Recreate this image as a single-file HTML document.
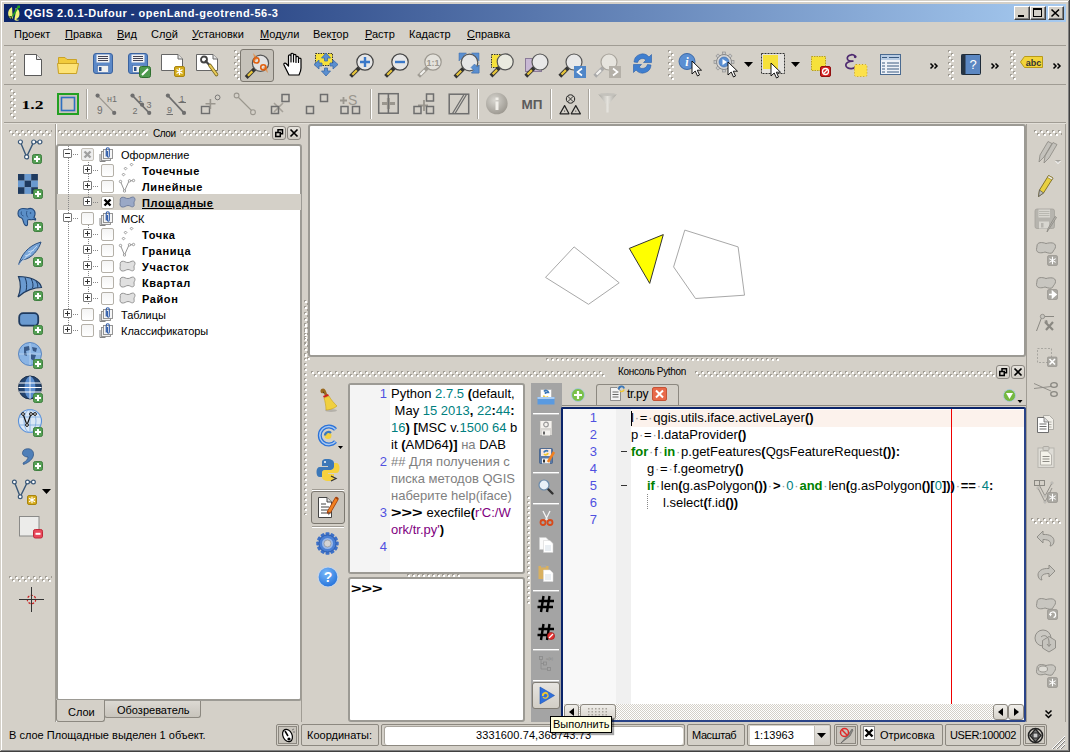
<!DOCTYPE html><html><head><meta charset="utf-8"><style>
*{margin:0;padding:0;box-sizing:border-box}
html,body{width:1070px;height:752px;overflow:hidden;background:#d4d0c8}
body{position:relative;font-family:"Liberation Sans",sans-serif;font-size:11px;color:#000}
.t{position:absolute;white-space:pre;line-height:13px}
.b{font-weight:bold;letter-spacing:0.6px}
svg{position:absolute;overflow:visible}
</style></head><body>
<svg width="0" height="0" style="position:absolute"><defs><pattern id="grip" width="6" height="6" patternUnits="userSpaceOnUse"><rect x="0" y="0" width="2" height="2" fill="#a09c94"/><rect x="1" y="1" width="2" height="2" fill="#fff"/><rect x="3" y="3" width="2" height="2" fill="#a09c94"/><rect x="4" y="4" width="2" height="2" fill="#fff"/></pattern><pattern id="grip1" width="3" height="5" patternUnits="userSpaceOnUse"><rect x="0" y="0" width="2" height="2" fill="#a09c94"/><rect x="1" y="1" width="2" height="2" fill="#fff"/></pattern><pattern id="grip1h" width="5" height="3" patternUnits="userSpaceOnUse"><rect x="0" y="0" width="2" height="2" fill="#a09c94"/><rect x="1" y="1" width="2" height="2" fill="#fff"/></pattern></defs></svg>
<div style="position:absolute;left:0px;top:0px;width:1070px;height:752px;border-top:1px solid #d4d0c8;border-left:1px solid #d4d0c8;"></div><div style="position:absolute;left:1px;top:1px;width:1068px;height:1px;background:#fff"></div><div style="position:absolute;left:1px;top:1px;width:1px;height:750px;background:#fff"></div><div style="position:absolute;left:1069px;top:0px;width:1px;height:752px;background:#404040"></div><div style="position:absolute;left:0px;top:751px;width:1070px;height:1px;background:#404040"></div><div style="position:absolute;left:1068px;top:1px;width:1px;height:750px;background:#808080"></div><div style="position:absolute;left:1px;top:750px;width:1068px;height:1px;background:#808080"></div><div style="position:absolute;left:4px;top:4px;width:1062px;height:18px;background:linear-gradient(to right,#0a246a,#a6caf0)"></div><svg style="position:absolute;left:7px;top:5px;" width="14" height="17" viewBox="0 0 14 17"><path d="M5 2C2 3.5 0.8 6.5 1.2 9.5C1.6 12.5 3.5 14 5.5 13.8C6 12 5.8 10.5 5.5 9C5.2 7 5.3 4 5 2Z" fill="#f2f27a"/><path d="M8.5 3C11.5 3.5 12.8 6.5 12.5 9.5C12.2 12 11 13.5 9 14C10 14.8 11 15 12.5 14.8C11 16 9 16 7.5 15C7.5 12 8.5 10 8.5 8C8.5 6 8.8 4.5 8.5 3Z" fill="#f2f27a"/><path d="M11.5 1.5L5.5 11.5" stroke="#20a020" stroke-width="1.5"/><rect x="10.5" y="0.5" width="2.5" height="2.5" fill="#20a020"/><path d="M1 12L4.5 11.5M4 11L4.5 14" stroke="#103010" stroke-width="1.1"/></svg><div class="t" style="left:24px;top:7px;color:#fff;font-weight:bold;letter-spacing:0.5px">QGIS 2.0.1-Dufour - openLand-geotrend-56-3</div><div style="position:absolute;left:1014px;top:6px;width:16px;height:14px;background:#d4d0c8;border-top:1px solid #fff;border-left:1px solid #fff;border-right:1px solid #404040;border-bottom:1px solid #404040;box-shadow:inset -1px -1px 0 #808080"></div><div style="position:absolute;left:1030px;top:6px;width:16px;height:14px;background:#d4d0c8;border-top:1px solid #fff;border-left:1px solid #fff;border-right:1px solid #404040;border-bottom:1px solid #404040;box-shadow:inset -1px -1px 0 #808080"></div><div style="position:absolute;left:1048px;top:6px;width:16px;height:14px;background:#d4d0c8;border-top:1px solid #fff;border-left:1px solid #fff;border-right:1px solid #404040;border-bottom:1px solid #404040;box-shadow:inset -1px -1px 0 #808080"></div><div style="position:absolute;left:1018px;top:15px;width:6px;height:2px;background:#000"></div><div style="position:absolute;left:1033px;top:8px;width:9px;height:9px;border:1px solid #000;border-top-width:2px"></div><svg style="position:absolute;left:1051px;top:9px;" width="9" height="8" viewBox="0 0 9 8"><path d="M0.5 0.5L8 7.5M8 0.5L0.5 7.5" stroke="#000" stroke-width="1.6"/></svg><div class="t" style="left:14px;top:28px;">П<u>р</u>оект</div><div class="t" style="left:65px;top:28px;"><u>П</u>равка</div><div class="t" style="left:117px;top:28px;"><u>В</u>ид</div><div class="t" style="left:151px;top:28px;">Сл<u>о</u>й</div><div class="t" style="left:192px;top:28px;"><u>У</u>становки</div><div class="t" style="left:260px;top:28px;"><u>М</u>одули</div><div class="t" style="left:313px;top:28px;">Век<u>т</u>ор</div><div class="t" style="left:365px;top:28px;"><u>Р</u>астр</div><div class="t" style="left:409px;top:28px;">Кадастр</div><div class="t" style="left:467px;top:28px;"><u>С</u>правка</div><div style="position:absolute;left:4px;top:45px;width:1062px;height:1px;background:#a09c94"></div><div style="position:absolute;left:4px;top:84px;width:1062px;height:1px;background:#a09c94"></div><div style="position:absolute;left:4px;top:122px;width:1062px;height:1px;background:#a09c94"></div><div style="position:absolute;left:4px;top:123px;width:1062px;height:1px;background:#e2dfd8"></div><div style="position:absolute;left:55px;top:124px;width:1px;height:598px;background:#a09c94"></div><div style="position:absolute;left:56px;top:124px;width:1px;height:598px;background:#fff"></div><svg style="left:9px;top:130px" width="43" height="6"><rect width="43" height="6" fill="url(#grip)"/></svg><svg style="left:9px;top:576px" width="43" height="6"><rect width="43" height="6" fill="url(#grip)"/></svg><svg style="left:58px;top:130px" width="90" height="6"><rect width="90" height="6" fill="url(#grip)"/></svg><div class="t" style="left:153px;top:127px;font-size:10px;letter-spacing:-0.4px">Слои</div><svg style="left:180px;top:130px" width="90" height="6"><rect width="90" height="6" fill="url(#grip)"/></svg><div style="position:absolute;left:272px;top:126px;width:14px;height:14px;border:1px solid #8a8680;border-radius:3px;background:linear-gradient(#e6e3dd,#d0ccc4)"></div><div style="position:absolute;left:287px;top:126px;width:14px;height:14px;border:1px solid #8a8680;border-radius:3px;background:linear-gradient(#e6e3dd,#d0ccc4)"></div><svg style="position:absolute;left:275px;top:129px;" width="8" height="8" viewBox="0 0 8 8"><rect x="3" y="0.75" width="4.5" height="4" fill="none" stroke="#000" stroke-width="1.5"/><rect x="0.75" y="3.5" width="4.5" height="4" fill="#d8d4cc" stroke="#000" stroke-width="1.5"/></svg><svg style="position:absolute;left:290px;top:129px;" width="8" height="8" viewBox="0 0 8 8"><path d="M0.5 0.5L7.5 7.5M7.5 0.5L0.5 7.5" stroke="#000" stroke-width="1.7"/></svg><div style="position:absolute;left:56px;top:144px;width:246px;height:557px;background:#fff;border:2px solid #9c9a94;border-radius:3px"></div><div style="position:absolute;left:56px;top:700px;width:49px;height:22px;background:#d4d0c8;border:1px solid #8c8880;border-top:none;border-radius:0 0 3px 3px"></div><div class="t" style="left:68px;top:706px;">Слои</div><div style="position:absolute;left:104px;top:701px;width:97px;height:17px;background:linear-gradient(#dcd9d3,#c8c4bc);border:1px solid #8c8880;border-top:none;border-radius:0 0 3px 3px"></div><div class="t" style="left:117px;top:704px;">Обозреватель</div><svg style="left:304px;top:300px" width="6" height="60"><rect width="6" height="60" fill="url(#grip)"/></svg><div style="position:absolute;left:308px;top:124px;width:718px;height:233px;background:#fff;border:2px solid #9c9a94;border-radius:3px"></div><div style="position:absolute;left:301px;top:360px;width:1px;height:362px;background:#a09c94"></div><svg style="position:absolute;left:546px;top:358px;" width="234" height="3" viewBox="0 0 234 3"><rect width="234" height="3" fill="url(#grip1h)"/></svg><svg style="left:311px;top:371px" width="294" height="6"><rect width="294" height="6" fill="url(#grip)"/></svg><div class="t" style="left:618px;top:365px;font-size:10px;letter-spacing:-0.3px">Консоль Python</div><svg style="left:695px;top:371px" width="300" height="6"><rect width="300" height="6" fill="url(#grip)"/></svg><div style="position:absolute;left:996px;top:365px;width:14px;height:14px;border:1px solid #8a8680;border-radius:3px;background:linear-gradient(#e6e3dd,#d0ccc4)"></div><div style="position:absolute;left:1011px;top:365px;width:14px;height:14px;border:1px solid #8a8680;border-radius:3px;background:linear-gradient(#e6e3dd,#d0ccc4)"></div><svg style="position:absolute;left:999px;top:368px;" width="8" height="8" viewBox="0 0 8 8"><rect x="3" y="0.75" width="4.5" height="4" fill="none" stroke="#000" stroke-width="1.5"/><rect x="0.75" y="3.5" width="4.5" height="4" fill="#d8d4cc" stroke="#000" stroke-width="1.5"/></svg><svg style="position:absolute;left:1014px;top:368px;" width="8" height="8" viewBox="0 0 8 8"><path d="M0.5 0.5L7.5 7.5M7.5 0.5L0.5 7.5" stroke="#000" stroke-width="1.7"/></svg><div style="position:absolute;left:348px;top:383px;width:177px;height:191px;background:#fff;border:2px solid #9c9a94;border-radius:3px"></div><div style="position:absolute;left:350px;top:385px;width:40px;height:187px;background:#f4f4f4"></div><svg style="position:absolute;left:407px;top:574px;" width="54" height="3" viewBox="0 0 54 3"><rect width="54" height="3" fill="url(#grip1h)"/></svg><svg style="position:absolute;left:527px;top:496px;" width="3" height="108" viewBox="0 0 3 108"><rect width="3" height="108" fill="url(#grip1)"/></svg><div style="position:absolute;left:348px;top:577px;width:177px;height:145px;background:#fff;border:2px solid #9c9a94;border-radius:3px"></div><div style="position:absolute;left:531px;top:383px;width:31px;height:339px;background:#a4a4a4"></div><div style="position:absolute;left:596px;top:384px;width:83px;height:22px;background:#d4d0c8;border:1px solid #8c8880;border-bottom:none;border-radius:3px 3px 0 0"></div><div style="position:absolute;left:562px;top:405px;width:464px;height:1px;background:#8c8880"></div><div style="position:absolute;left:561px;top:407px;width:465px;height:315px;background:#fff;border:2px solid #0a246a;border-right-color:#2a4488;border-bottom-color:#2a4488;border-radius:2px"></div><div style="position:absolute;left:563px;top:409px;width:53px;height:295px;background:#f8f8f8"></div><div style="position:absolute;left:616px;top:409px;width:15px;height:295px;background:#f0f0f0"></div><div style="position:absolute;left:631px;top:410px;width:393px;height:17px;background:#fcf2ec"></div><div style="position:absolute;left:951px;top:409px;width:1px;height:295px;background:#e00"></div><div style="position:absolute;left:1026px;top:124px;width:1px;height:598px;background:#a09c94"></div><div style="position:absolute;left:1065px;top:124px;width:1px;height:598px;background:#a09c94"></div><svg style="left:1034px;top:130px" width="28" height="6"><rect width="28" height="6" fill="url(#grip)"/></svg><div class="t" style="left:9px;top:729px;">В слое Площадные выделен 1 объект.</div><div style="position:absolute;left:57px;top:194px;width:244px;height:16px;background:#d4d0c8"></div><svg style="position:absolute;left:68px;top:146px;" width="1" height="180" viewBox="0 0 1 180"><rect x="0" y="0" width="1" height="1" fill="#888"/><rect x="0" y="2" width="1" height="1" fill="#888"/><rect x="0" y="4" width="1" height="1" fill="#888"/><rect x="0" y="6" width="1" height="1" fill="#888"/><rect x="0" y="8" width="1" height="1" fill="#888"/><rect x="0" y="10" width="1" height="1" fill="#888"/><rect x="0" y="12" width="1" height="1" fill="#888"/><rect x="0" y="14" width="1" height="1" fill="#888"/><rect x="0" y="16" width="1" height="1" fill="#888"/><rect x="0" y="18" width="1" height="1" fill="#888"/><rect x="0" y="20" width="1" height="1" fill="#888"/><rect x="0" y="22" width="1" height="1" fill="#888"/><rect x="0" y="24" width="1" height="1" fill="#888"/><rect x="0" y="26" width="1" height="1" fill="#888"/><rect x="0" y="28" width="1" height="1" fill="#888"/><rect x="0" y="30" width="1" height="1" fill="#888"/><rect x="0" y="32" width="1" height="1" fill="#888"/><rect x="0" y="34" width="1" height="1" fill="#888"/><rect x="0" y="36" width="1" height="1" fill="#888"/><rect x="0" y="38" width="1" height="1" fill="#888"/><rect x="0" y="40" width="1" height="1" fill="#888"/><rect x="0" y="42" width="1" height="1" fill="#888"/><rect x="0" y="44" width="1" height="1" fill="#888"/><rect x="0" y="46" width="1" height="1" fill="#888"/><rect x="0" y="48" width="1" height="1" fill="#888"/><rect x="0" y="50" width="1" height="1" fill="#888"/><rect x="0" y="52" width="1" height="1" fill="#888"/><rect x="0" y="54" width="1" height="1" fill="#888"/><rect x="0" y="56" width="1" height="1" fill="#888"/><rect x="0" y="58" width="1" height="1" fill="#888"/><rect x="0" y="60" width="1" height="1" fill="#888"/><rect x="0" y="62" width="1" height="1" fill="#888"/><rect x="0" y="64" width="1" height="1" fill="#888"/><rect x="0" y="66" width="1" height="1" fill="#888"/><rect x="0" y="68" width="1" height="1" fill="#888"/><rect x="0" y="70" width="1" height="1" fill="#888"/><rect x="0" y="72" width="1" height="1" fill="#888"/><rect x="0" y="74" width="1" height="1" fill="#888"/><rect x="0" y="76" width="1" height="1" fill="#888"/><rect x="0" y="78" width="1" height="1" fill="#888"/><rect x="0" y="80" width="1" height="1" fill="#888"/><rect x="0" y="82" width="1" height="1" fill="#888"/><rect x="0" y="84" width="1" height="1" fill="#888"/><rect x="0" y="86" width="1" height="1" fill="#888"/><rect x="0" y="88" width="1" height="1" fill="#888"/><rect x="0" y="90" width="1" height="1" fill="#888"/><rect x="0" y="92" width="1" height="1" fill="#888"/><rect x="0" y="94" width="1" height="1" fill="#888"/><rect x="0" y="96" width="1" height="1" fill="#888"/><rect x="0" y="98" width="1" height="1" fill="#888"/><rect x="0" y="100" width="1" height="1" fill="#888"/><rect x="0" y="102" width="1" height="1" fill="#888"/><rect x="0" y="104" width="1" height="1" fill="#888"/><rect x="0" y="106" width="1" height="1" fill="#888"/><rect x="0" y="108" width="1" height="1" fill="#888"/><rect x="0" y="110" width="1" height="1" fill="#888"/><rect x="0" y="112" width="1" height="1" fill="#888"/><rect x="0" y="114" width="1" height="1" fill="#888"/><rect x="0" y="116" width="1" height="1" fill="#888"/><rect x="0" y="118" width="1" height="1" fill="#888"/><rect x="0" y="120" width="1" height="1" fill="#888"/><rect x="0" y="122" width="1" height="1" fill="#888"/><rect x="0" y="124" width="1" height="1" fill="#888"/><rect x="0" y="126" width="1" height="1" fill="#888"/><rect x="0" y="128" width="1" height="1" fill="#888"/><rect x="0" y="130" width="1" height="1" fill="#888"/><rect x="0" y="132" width="1" height="1" fill="#888"/><rect x="0" y="134" width="1" height="1" fill="#888"/><rect x="0" y="136" width="1" height="1" fill="#888"/><rect x="0" y="138" width="1" height="1" fill="#888"/><rect x="0" y="140" width="1" height="1" fill="#888"/><rect x="0" y="142" width="1" height="1" fill="#888"/><rect x="0" y="144" width="1" height="1" fill="#888"/><rect x="0" y="146" width="1" height="1" fill="#888"/><rect x="0" y="148" width="1" height="1" fill="#888"/><rect x="0" y="150" width="1" height="1" fill="#888"/><rect x="0" y="152" width="1" height="1" fill="#888"/><rect x="0" y="154" width="1" height="1" fill="#888"/><rect x="0" y="156" width="1" height="1" fill="#888"/><rect x="0" y="158" width="1" height="1" fill="#888"/><rect x="0" y="160" width="1" height="1" fill="#888"/><rect x="0" y="162" width="1" height="1" fill="#888"/><rect x="0" y="164" width="1" height="1" fill="#888"/><rect x="0" y="166" width="1" height="1" fill="#888"/><rect x="0" y="168" width="1" height="1" fill="#888"/><rect x="0" y="170" width="1" height="1" fill="#888"/><rect x="0" y="172" width="1" height="1" fill="#888"/><rect x="0" y="174" width="1" height="1" fill="#888"/><rect x="0" y="176" width="1" height="1" fill="#888"/><rect x="0" y="178" width="1" height="1" fill="#888"/></svg><svg style="position:absolute;left:88px;top:160px;" width="1" height="46" viewBox="0 0 1 46"><rect x="0" y="0" width="1" height="1" fill="#888"/><rect x="0" y="2" width="1" height="1" fill="#888"/><rect x="0" y="4" width="1" height="1" fill="#888"/><rect x="0" y="6" width="1" height="1" fill="#888"/><rect x="0" y="8" width="1" height="1" fill="#888"/><rect x="0" y="10" width="1" height="1" fill="#888"/><rect x="0" y="12" width="1" height="1" fill="#888"/><rect x="0" y="14" width="1" height="1" fill="#888"/><rect x="0" y="16" width="1" height="1" fill="#888"/><rect x="0" y="18" width="1" height="1" fill="#888"/><rect x="0" y="20" width="1" height="1" fill="#888"/><rect x="0" y="22" width="1" height="1" fill="#888"/><rect x="0" y="24" width="1" height="1" fill="#888"/><rect x="0" y="26" width="1" height="1" fill="#888"/><rect x="0" y="28" width="1" height="1" fill="#888"/><rect x="0" y="30" width="1" height="1" fill="#888"/><rect x="0" y="32" width="1" height="1" fill="#888"/><rect x="0" y="34" width="1" height="1" fill="#888"/><rect x="0" y="36" width="1" height="1" fill="#888"/><rect x="0" y="38" width="1" height="1" fill="#888"/><rect x="0" y="40" width="1" height="1" fill="#888"/><rect x="0" y="42" width="1" height="1" fill="#888"/><rect x="0" y="44" width="1" height="1" fill="#888"/></svg><svg style="position:absolute;left:88px;top:225px;" width="1" height="80" viewBox="0 0 1 80"><rect x="0" y="0" width="1" height="1" fill="#888"/><rect x="0" y="2" width="1" height="1" fill="#888"/><rect x="0" y="4" width="1" height="1" fill="#888"/><rect x="0" y="6" width="1" height="1" fill="#888"/><rect x="0" y="8" width="1" height="1" fill="#888"/><rect x="0" y="10" width="1" height="1" fill="#888"/><rect x="0" y="12" width="1" height="1" fill="#888"/><rect x="0" y="14" width="1" height="1" fill="#888"/><rect x="0" y="16" width="1" height="1" fill="#888"/><rect x="0" y="18" width="1" height="1" fill="#888"/><rect x="0" y="20" width="1" height="1" fill="#888"/><rect x="0" y="22" width="1" height="1" fill="#888"/><rect x="0" y="24" width="1" height="1" fill="#888"/><rect x="0" y="26" width="1" height="1" fill="#888"/><rect x="0" y="28" width="1" height="1" fill="#888"/><rect x="0" y="30" width="1" height="1" fill="#888"/><rect x="0" y="32" width="1" height="1" fill="#888"/><rect x="0" y="34" width="1" height="1" fill="#888"/><rect x="0" y="36" width="1" height="1" fill="#888"/><rect x="0" y="38" width="1" height="1" fill="#888"/><rect x="0" y="40" width="1" height="1" fill="#888"/><rect x="0" y="42" width="1" height="1" fill="#888"/><rect x="0" y="44" width="1" height="1" fill="#888"/><rect x="0" y="46" width="1" height="1" fill="#888"/><rect x="0" y="48" width="1" height="1" fill="#888"/><rect x="0" y="50" width="1" height="1" fill="#888"/><rect x="0" y="52" width="1" height="1" fill="#888"/><rect x="0" y="54" width="1" height="1" fill="#888"/><rect x="0" y="56" width="1" height="1" fill="#888"/><rect x="0" y="58" width="1" height="1" fill="#888"/><rect x="0" y="60" width="1" height="1" fill="#888"/><rect x="0" y="62" width="1" height="1" fill="#888"/><rect x="0" y="64" width="1" height="1" fill="#888"/><rect x="0" y="66" width="1" height="1" fill="#888"/><rect x="0" y="68" width="1" height="1" fill="#888"/><rect x="0" y="70" width="1" height="1" fill="#888"/><rect x="0" y="72" width="1" height="1" fill="#888"/><rect x="0" y="74" width="1" height="1" fill="#888"/><rect x="0" y="76" width="1" height="1" fill="#888"/><rect x="0" y="78" width="1" height="1" fill="#888"/></svg><div style="position:absolute;left:63px;top:149px;width:9px;height:9px;border:1px solid #7a7a7a;background:#fff;border-radius:1px"></div><div style="position:absolute;left:65px;top:153px;width:5px;height:1px;background:#333"></div><svg style="position:absolute;left:73px;top:154px;" width="6" height="1" viewBox="0 0 6 1"><rect x="0" y="0" width="1" height="1" fill="#888"/><rect x="2" y="0" width="1" height="1" fill="#888"/><rect x="4" y="0" width="1" height="1" fill="#888"/></svg><div style="position:absolute;left:81px;top:148px;width:13px;height:13px;border:1px solid #c4c0b8;border-radius:2px;background:#eee"></div><svg style="position:absolute;left:84px;top:151px;" width="7" height="7" viewBox="0 0 7 7"><path d="M0.5 0.5L6.5 6.5M6.5 0.5L0.5 6.5" stroke="#a0a0a0" stroke-width="2.4"/></svg><svg style="position:absolute;left:99px;top:146px;" width="15" height="16" viewBox="0 0 15 16"><path d="M1 15.5V8M1 15.5H6.5" stroke="#777" fill="none" stroke-width="0.9"/><rect x="2.5" y="5.5" width="9" height="9" fill="#efefef" stroke="#8a8a8a" stroke-width="0.9"/><rect x="4.5" y="3.5" width="9" height="9" fill="#f6f6f6" stroke="#8a8a8a" stroke-width="0.9"/><path d="M7.2 10.5V3.2C7.2 1.2 10.3 1.2 10.3 3.2V10C10.3 11.6 8.4 11.6 8.4 10V5" stroke="#2d5aa8" fill="none" stroke-width="1.1"/></svg><div class="t" style="left:121px;top:149px;">Оформление</div><div style="position:absolute;left:83px;top:165px;width:9px;height:9px;border:1px solid #7a7a7a;background:#fff;border-radius:1px"></div><div style="position:absolute;left:85px;top:169px;width:5px;height:1px;background:#333"></div><div style="position:absolute;left:87px;top:167px;width:1px;height:5px;background:#333"></div><svg style="position:absolute;left:93px;top:170px;" width="6" height="1" viewBox="0 0 6 1"><rect x="0" y="0" width="1" height="1" fill="#888"/><rect x="2" y="0" width="1" height="1" fill="#888"/><rect x="4" y="0" width="1" height="1" fill="#888"/></svg><div style="position:absolute;left:101px;top:164px;width:13px;height:13px;border:1px solid #b4b0a8;border-radius:2px;background:linear-gradient(#f4f4f4,#ffffff)"></div><svg style="position:absolute;left:121px;top:163px;" width="16" height="14" viewBox="0 0 16 14"><rect x="9.5" y="0.5" width="2" height="2" transform="rotate(45 10.5 1.5)" fill="#fff" stroke="#888" stroke-width="0.8"/><rect x="3.5" y="4.5" width="2" height="2" transform="rotate(45 4.5 5.5)" fill="#fff" stroke="#888" stroke-width="0.8"/><rect x="1.5" y="10.5" width="2" height="2" transform="rotate(45 2.5 11.5)" fill="#fff" stroke="#888" stroke-width="0.8"/></svg><div class="t" style="left:142px;top:165px;font-weight:bold;letter-spacing:0.6px;">Точечные</div><div style="position:absolute;left:83px;top:181px;width:9px;height:9px;border:1px solid #7a7a7a;background:#fff;border-radius:1px"></div><div style="position:absolute;left:85px;top:185px;width:5px;height:1px;background:#333"></div><div style="position:absolute;left:87px;top:183px;width:1px;height:5px;background:#333"></div><svg style="position:absolute;left:93px;top:186px;" width="6" height="1" viewBox="0 0 6 1"><rect x="0" y="0" width="1" height="1" fill="#888"/><rect x="2" y="0" width="1" height="1" fill="#888"/><rect x="4" y="0" width="1" height="1" fill="#888"/></svg><div style="position:absolute;left:101px;top:180px;width:13px;height:13px;border:1px solid #b4b0a8;border-radius:2px;background:linear-gradient(#f4f4f4,#ffffff)"></div><svg style="position:absolute;left:119px;top:179px;" width="17" height="14" viewBox="0 0 17 14"><path d="M1.5 2.5L5.5 12L10 2L14.5 1.5" stroke="#888" fill="none" stroke-width="0.9"/><circle cx="1.5" cy="2.5" r="1.2" fill="#fff" stroke="#888" stroke-width="0.8"/><circle cx="5.5" cy="12" r="1.2" fill="#fff" stroke="#888" stroke-width="0.8"/><circle cx="10.5" cy="1.8" r="1.2" fill="#fff" stroke="#888" stroke-width="0.8"/><circle cx="14.5" cy="1.5" r="1.2" fill="#fff" stroke="#888" stroke-width="0.8"/></svg><div class="t" style="left:142px;top:181px;font-weight:bold;letter-spacing:0.6px;">Линейные</div><div style="position:absolute;left:83px;top:197px;width:9px;height:9px;border:1px solid #7a7a7a;background:#fff;border-radius:1px"></div><div style="position:absolute;left:85px;top:201px;width:5px;height:1px;background:#333"></div><div style="position:absolute;left:87px;top:199px;width:1px;height:5px;background:#333"></div><svg style="position:absolute;left:93px;top:202px;" width="6" height="1" viewBox="0 0 6 1"><rect x="0" y="0" width="1" height="1" fill="#888"/><rect x="2" y="0" width="1" height="1" fill="#888"/><rect x="4" y="0" width="1" height="1" fill="#888"/></svg><div style="position:absolute;left:101px;top:196px;width:13px;height:13px;border:1px solid #b4b0a8;border-radius:2px;background:#fff"></div><svg style="position:absolute;left:104px;top:199px;" width="7" height="7" viewBox="0 0 7 7"><path d="M0.5 0.5L6.5 6.5M6.5 0.5L0.5 6.5" stroke="#000" stroke-width="2.4"/></svg><svg style="position:absolute;left:119px;top:196px;" width="17" height="12" viewBox="0 0 17 12"><path d="M1.2 3.5C1.5 1 4 0.8 6 1.8C8 2.8 10 2.8 12 1.5C14 0.5 16 1.2 16 3.5C16 5 14.8 5.5 15 7C15.3 9 15.5 10.5 13.5 10.8C12 11 11 9.5 9 9.5C7 9.5 5.5 11.5 3 11C0.8 10.5 0.8 8 1.2 6.5C1.5 5.5 1 4.5 1.2 3.5Z" fill="#9aa8c6" stroke="#6a7898" stroke-width="0.9"/></svg><div class="t" style="left:142px;top:197px;font-weight:bold;letter-spacing:0.6px;text-decoration:underline;">Площадные</div><div style="position:absolute;left:63px;top:213px;width:9px;height:9px;border:1px solid #7a7a7a;background:#fff;border-radius:1px"></div><div style="position:absolute;left:65px;top:217px;width:5px;height:1px;background:#333"></div><svg style="position:absolute;left:73px;top:218px;" width="6" height="1" viewBox="0 0 6 1"><rect x="0" y="0" width="1" height="1" fill="#888"/><rect x="2" y="0" width="1" height="1" fill="#888"/><rect x="4" y="0" width="1" height="1" fill="#888"/></svg><div style="position:absolute;left:81px;top:212px;width:13px;height:13px;border:1px solid #b4b0a8;border-radius:2px;background:linear-gradient(#f4f4f4,#ffffff)"></div><svg style="position:absolute;left:99px;top:210px;" width="15" height="16" viewBox="0 0 15 16"><path d="M1 15.5V8M1 15.5H6.5" stroke="#777" fill="none" stroke-width="0.9"/><rect x="2.5" y="5.5" width="9" height="9" fill="#efefef" stroke="#8a8a8a" stroke-width="0.9"/><rect x="4.5" y="3.5" width="9" height="9" fill="#f6f6f6" stroke="#8a8a8a" stroke-width="0.9"/><path d="M7.2 10.5V3.2C7.2 1.2 10.3 1.2 10.3 3.2V10C10.3 11.6 8.4 11.6 8.4 10V5" stroke="#2d5aa8" fill="none" stroke-width="1.1"/></svg><div class="t" style="left:121px;top:213px;">МСК</div><div style="position:absolute;left:83px;top:229px;width:9px;height:9px;border:1px solid #7a7a7a;background:#fff;border-radius:1px"></div><div style="position:absolute;left:85px;top:233px;width:5px;height:1px;background:#333"></div><div style="position:absolute;left:87px;top:231px;width:1px;height:5px;background:#333"></div><svg style="position:absolute;left:93px;top:234px;" width="6" height="1" viewBox="0 0 6 1"><rect x="0" y="0" width="1" height="1" fill="#888"/><rect x="2" y="0" width="1" height="1" fill="#888"/><rect x="4" y="0" width="1" height="1" fill="#888"/></svg><div style="position:absolute;left:101px;top:228px;width:13px;height:13px;border:1px solid #b4b0a8;border-radius:2px;background:linear-gradient(#f4f4f4,#ffffff)"></div><svg style="position:absolute;left:121px;top:227px;" width="16" height="14" viewBox="0 0 16 14"><rect x="9.5" y="0.5" width="2" height="2" transform="rotate(45 10.5 1.5)" fill="#fff" stroke="#888" stroke-width="0.8"/><rect x="3.5" y="4.5" width="2" height="2" transform="rotate(45 4.5 5.5)" fill="#fff" stroke="#888" stroke-width="0.8"/><rect x="1.5" y="10.5" width="2" height="2" transform="rotate(45 2.5 11.5)" fill="#fff" stroke="#888" stroke-width="0.8"/></svg><div class="t" style="left:142px;top:229px;font-weight:bold;letter-spacing:0.6px;">Точка</div><div style="position:absolute;left:83px;top:245px;width:9px;height:9px;border:1px solid #7a7a7a;background:#fff;border-radius:1px"></div><div style="position:absolute;left:85px;top:249px;width:5px;height:1px;background:#333"></div><div style="position:absolute;left:87px;top:247px;width:1px;height:5px;background:#333"></div><svg style="position:absolute;left:93px;top:250px;" width="6" height="1" viewBox="0 0 6 1"><rect x="0" y="0" width="1" height="1" fill="#888"/><rect x="2" y="0" width="1" height="1" fill="#888"/><rect x="4" y="0" width="1" height="1" fill="#888"/></svg><div style="position:absolute;left:101px;top:244px;width:13px;height:13px;border:1px solid #b4b0a8;border-radius:2px;background:linear-gradient(#f4f4f4,#ffffff)"></div><svg style="position:absolute;left:119px;top:243px;" width="17" height="14" viewBox="0 0 17 14"><path d="M1.5 2.5L5.5 12L10 2L14.5 1.5" stroke="#888" fill="none" stroke-width="0.9"/><circle cx="1.5" cy="2.5" r="1.2" fill="#fff" stroke="#888" stroke-width="0.8"/><circle cx="5.5" cy="12" r="1.2" fill="#fff" stroke="#888" stroke-width="0.8"/><circle cx="10.5" cy="1.8" r="1.2" fill="#fff" stroke="#888" stroke-width="0.8"/><circle cx="14.5" cy="1.5" r="1.2" fill="#fff" stroke="#888" stroke-width="0.8"/></svg><div class="t" style="left:142px;top:245px;font-weight:bold;letter-spacing:0.6px;">Граница</div><div style="position:absolute;left:83px;top:261px;width:9px;height:9px;border:1px solid #7a7a7a;background:#fff;border-radius:1px"></div><div style="position:absolute;left:85px;top:265px;width:5px;height:1px;background:#333"></div><div style="position:absolute;left:87px;top:263px;width:1px;height:5px;background:#333"></div><svg style="position:absolute;left:93px;top:266px;" width="6" height="1" viewBox="0 0 6 1"><rect x="0" y="0" width="1" height="1" fill="#888"/><rect x="2" y="0" width="1" height="1" fill="#888"/><rect x="4" y="0" width="1" height="1" fill="#888"/></svg><div style="position:absolute;left:101px;top:260px;width:13px;height:13px;border:1px solid #b4b0a8;border-radius:2px;background:linear-gradient(#f4f4f4,#ffffff)"></div><svg style="position:absolute;left:119px;top:260px;" width="17" height="12" viewBox="0 0 17 12"><path d="M1.2 3.5C1.5 1 4 0.8 6 1.8C8 2.8 10 2.8 12 1.5C14 0.5 16 1.2 16 3.5C16 5 14.8 5.5 15 7C15.3 9 15.5 10.5 13.5 10.8C12 11 11 9.5 9 9.5C7 9.5 5.5 11.5 3 11C0.8 10.5 0.8 8 1.2 6.5C1.5 5.5 1 4.5 1.2 3.5Z" fill="#e0e0e0" stroke="#8a8a8a" stroke-width="0.9"/></svg><div class="t" style="left:142px;top:261px;font-weight:bold;letter-spacing:0.6px;">Участок</div><div style="position:absolute;left:83px;top:277px;width:9px;height:9px;border:1px solid #7a7a7a;background:#fff;border-radius:1px"></div><div style="position:absolute;left:85px;top:281px;width:5px;height:1px;background:#333"></div><div style="position:absolute;left:87px;top:279px;width:1px;height:5px;background:#333"></div><svg style="position:absolute;left:93px;top:282px;" width="6" height="1" viewBox="0 0 6 1"><rect x="0" y="0" width="1" height="1" fill="#888"/><rect x="2" y="0" width="1" height="1" fill="#888"/><rect x="4" y="0" width="1" height="1" fill="#888"/></svg><div style="position:absolute;left:101px;top:276px;width:13px;height:13px;border:1px solid #b4b0a8;border-radius:2px;background:linear-gradient(#f4f4f4,#ffffff)"></div><svg style="position:absolute;left:119px;top:276px;" width="17" height="12" viewBox="0 0 17 12"><path d="M1.2 3.5C1.5 1 4 0.8 6 1.8C8 2.8 10 2.8 12 1.5C14 0.5 16 1.2 16 3.5C16 5 14.8 5.5 15 7C15.3 9 15.5 10.5 13.5 10.8C12 11 11 9.5 9 9.5C7 9.5 5.5 11.5 3 11C0.8 10.5 0.8 8 1.2 6.5C1.5 5.5 1 4.5 1.2 3.5Z" fill="#e0e0e0" stroke="#8a8a8a" stroke-width="0.9"/></svg><div class="t" style="left:142px;top:277px;font-weight:bold;letter-spacing:0.6px;">Квартал</div><div style="position:absolute;left:83px;top:293px;width:9px;height:9px;border:1px solid #7a7a7a;background:#fff;border-radius:1px"></div><div style="position:absolute;left:85px;top:297px;width:5px;height:1px;background:#333"></div><div style="position:absolute;left:87px;top:295px;width:1px;height:5px;background:#333"></div><svg style="position:absolute;left:93px;top:298px;" width="6" height="1" viewBox="0 0 6 1"><rect x="0" y="0" width="1" height="1" fill="#888"/><rect x="2" y="0" width="1" height="1" fill="#888"/><rect x="4" y="0" width="1" height="1" fill="#888"/></svg><div style="position:absolute;left:101px;top:292px;width:13px;height:13px;border:1px solid #b4b0a8;border-radius:2px;background:linear-gradient(#f4f4f4,#ffffff)"></div><svg style="position:absolute;left:119px;top:292px;" width="17" height="12" viewBox="0 0 17 12"><path d="M1.2 3.5C1.5 1 4 0.8 6 1.8C8 2.8 10 2.8 12 1.5C14 0.5 16 1.2 16 3.5C16 5 14.8 5.5 15 7C15.3 9 15.5 10.5 13.5 10.8C12 11 11 9.5 9 9.5C7 9.5 5.5 11.5 3 11C0.8 10.5 0.8 8 1.2 6.5C1.5 5.5 1 4.5 1.2 3.5Z" fill="#e0e0e0" stroke="#8a8a8a" stroke-width="0.9"/></svg><div class="t" style="left:142px;top:293px;font-weight:bold;letter-spacing:0.6px;">Район</div><div style="position:absolute;left:63px;top:309px;width:9px;height:9px;border:1px solid #7a7a7a;background:#fff;border-radius:1px"></div><div style="position:absolute;left:65px;top:313px;width:5px;height:1px;background:#333"></div><div style="position:absolute;left:67px;top:311px;width:1px;height:5px;background:#333"></div><svg style="position:absolute;left:73px;top:314px;" width="6" height="1" viewBox="0 0 6 1"><rect x="0" y="0" width="1" height="1" fill="#888"/><rect x="2" y="0" width="1" height="1" fill="#888"/><rect x="4" y="0" width="1" height="1" fill="#888"/></svg><div style="position:absolute;left:81px;top:308px;width:13px;height:13px;border:1px solid #b4b0a8;border-radius:2px;background:linear-gradient(#f4f4f4,#ffffff)"></div><svg style="position:absolute;left:99px;top:306px;" width="15" height="16" viewBox="0 0 15 16"><path d="M1 15.5V8M1 15.5H6.5" stroke="#777" fill="none" stroke-width="0.9"/><rect x="2.5" y="5.5" width="9" height="9" fill="#efefef" stroke="#8a8a8a" stroke-width="0.9"/><rect x="4.5" y="3.5" width="9" height="9" fill="#f6f6f6" stroke="#8a8a8a" stroke-width="0.9"/><path d="M7.2 10.5V3.2C7.2 1.2 10.3 1.2 10.3 3.2V10C10.3 11.6 8.4 11.6 8.4 10V5" stroke="#2d5aa8" fill="none" stroke-width="1.1"/></svg><div class="t" style="left:121px;top:309px;">Таблицы</div><div style="position:absolute;left:63px;top:325px;width:9px;height:9px;border:1px solid #7a7a7a;background:#fff;border-radius:1px"></div><div style="position:absolute;left:65px;top:329px;width:5px;height:1px;background:#333"></div><div style="position:absolute;left:67px;top:327px;width:1px;height:5px;background:#333"></div><svg style="position:absolute;left:73px;top:330px;" width="6" height="1" viewBox="0 0 6 1"><rect x="0" y="0" width="1" height="1" fill="#888"/><rect x="2" y="0" width="1" height="1" fill="#888"/><rect x="4" y="0" width="1" height="1" fill="#888"/></svg><div style="position:absolute;left:81px;top:324px;width:13px;height:13px;border:1px solid #b4b0a8;border-radius:2px;background:linear-gradient(#f4f4f4,#ffffff)"></div><svg style="position:absolute;left:99px;top:322px;" width="15" height="16" viewBox="0 0 15 16"><path d="M1 15.5V8M1 15.5H6.5" stroke="#777" fill="none" stroke-width="0.9"/><rect x="2.5" y="5.5" width="9" height="9" fill="#efefef" stroke="#8a8a8a" stroke-width="0.9"/><rect x="4.5" y="3.5" width="9" height="9" fill="#f6f6f6" stroke="#8a8a8a" stroke-width="0.9"/><path d="M7.2 10.5V3.2C7.2 1.2 10.3 1.2 10.3 3.2V10C10.3 11.6 8.4 11.6 8.4 10V5" stroke="#2d5aa8" fill="none" stroke-width="1.1"/></svg><div class="t" style="left:121px;top:325px;">Классификаторы</div><div class="t" style="left:372px;top:385px;font-size:13px;line-height:17px;color:#5050e0;width:15px;text-align:right">1</div><div class="t" style="left:391px;top:385px;font-size:13px;line-height:17px;">Python <span style="color:#007f7f;">2.7.5</span> <span style="font-weight:bold;">(</span>default,</div><div class="t" style="left:391px;top:402px;font-size:13px;line-height:17px;"> May <span style="color:#007f7f;">15 2013</span><span style="font-weight:bold;">,</span> <span style="color:#007f7f;">22</span><span style="font-weight:bold;">:</span><span style="color:#007f7f;">44</span><span style="font-weight:bold;">:</span></div><div class="t" style="left:391px;top:419px;font-size:13px;line-height:17px;"><span style="color:#007f7f;">16</span><span style="font-weight:bold;">)</span> <span style="font-weight:bold;">[</span>MSC v.<span style="color:#007f7f;">1500 64</span> b</div><div class="t" style="left:391px;top:436px;font-size:13px;line-height:17px;">it <span style="font-weight:bold;">(</span>AMD64<span style="font-weight:bold;">)]</span> <span style="color:#808080;">на</span> DAB</div><div class="t" style="left:372px;top:453px;font-size:13px;line-height:17px;color:#5050e0;width:15px;text-align:right">2</div><div class="t" style="left:391px;top:453px;font-size:13px;line-height:17px;"><span style="color:#808080;">## Для получения с</span></div><div class="t" style="left:391px;top:470px;font-size:13px;line-height:17px;"><span style="color:#808080;">писка методов QGIS</span></div><div class="t" style="left:391px;top:487px;font-size:13px;line-height:17px;"><span style="color:#808080;">наберите help(iface)</span></div><div class="t" style="left:372px;top:504px;font-size:13px;line-height:17px;color:#5050e0;width:15px;text-align:right">3</div><div class="t" style="left:391px;top:504px;font-size:13px;line-height:17px;"><span style="display:inline-block;width:32px;font-weight:bold"><span style="display:inline-block;transform:scaleX(1.38);transform-origin:left">&gt;&gt;&gt;</span></span> execfile<span style="font-weight:bold;">(</span><span style="color:#7f007f;">r'C:/W</span></div><div class="t" style="left:391px;top:521px;font-size:13px;line-height:17px;"><span style="color:#7f007f;">ork/tr.py'</span><span style="font-weight:bold;">)</span></div><div class="t" style="left:372px;top:538px;font-size:13px;line-height:17px;color:#5050e0;width:15px;text-align:right">4</div><div class="t" style="left:391px;top:538px;font-size:13px;line-height:17px;"></div><div class="t" style="left:351px;top:580px;font-size:13px;line-height:17px;"><span style="display:inline-block;width:32px;font-weight:bold"><span style="display:inline-block;transform:scaleX(1.38);transform-origin:left">&gt;&gt;&gt;</span></span></div><div class="t" style="left:575px;top:409px;font-size:13px;line-height:17px;color:#5050e0;width:22px;text-align:right">1</div><div class="t" style="left:631px;top:409px;font-size:13px;line-height:17px;">l<span style="color:#999;padding:0 0.75px">·</span>=<span style="color:#999;padding:0 0.75px">·</span>qgis.utils.iface.activeLayer<span style="font-weight:bold;">()</span></div><div class="t" style="left:575px;top:426px;font-size:13px;line-height:17px;color:#5050e0;width:22px;text-align:right">2</div><div class="t" style="left:631px;top:426px;font-size:13px;line-height:17px;">p<span style="color:#999;padding:0 0.75px">·</span>=<span style="color:#999;padding:0 0.75px">·</span>l.dataProvider<span style="font-weight:bold;">()</span></div><div class="t" style="left:575px;top:443px;font-size:13px;line-height:17px;color:#5050e0;width:22px;text-align:right">3</div><div class="t" style="left:631px;top:443px;font-size:13px;line-height:17px;"><span style="color:#007f00;font-weight:bold;">for</span><span style="color:#999;padding:0 0.75px">·</span>f<span style="color:#999;padding:0 0.75px">·</span><span style="color:#007f00;font-weight:bold;">in</span><span style="color:#999;padding:0 0.75px">·</span>p.getFeatures<span style="font-weight:bold;">(</span>QgsFeatureRequest<span style="font-weight:bold;">()):</span></div><div class="t" style="left:575px;top:460px;font-size:13px;line-height:17px;color:#5050e0;width:22px;text-align:right">4</div><div class="t" style="left:631px;top:460px;font-size:13px;line-height:17px;"><span style="padding-left:16px"></span>g<span style="color:#999;padding:0 0.75px">·</span>=<span style="color:#999;padding:0 0.75px">·</span>f.geometry<span style="font-weight:bold;">()</span></div><div class="t" style="left:575px;top:477px;font-size:13px;line-height:17px;color:#5050e0;width:22px;text-align:right">5</div><div class="t" style="left:631px;top:477px;font-size:13px;line-height:17px;"><span style="padding-left:16px"></span><span style="color:#007f00;font-weight:bold;">if</span><span style="color:#999;padding:0 0.75px">·</span>len<span style="font-weight:bold;">(</span>g.asPolygon<span style="font-weight:bold;">())</span><span style="color:#999;padding:0 0.75px">·</span><span style="font-weight:bold;">&gt;</span><span style="color:#999;padding:0 0.75px">·</span><span style="color:#007f7f;">0</span><span style="color:#999;padding:0 0.75px">·</span><span style="color:#007f00;font-weight:bold;">and</span><span style="color:#999;padding:0 0.75px">·</span>len<span style="font-weight:bold;">(</span>g.asPolygon<span style="font-weight:bold;">()[</span><span style="color:#007f7f;">0</span><span style="font-weight:bold;">]))</span><span style="color:#999;padding:0 0.75px">·</span><span style="font-weight:bold;">==</span><span style="color:#999;padding:0 0.75px">·</span><span style="color:#007f7f;">4</span><span style="font-weight:bold;">:</span></div><div class="t" style="left:575px;top:494px;font-size:13px;line-height:17px;color:#5050e0;width:22px;text-align:right">6</div><div class="t" style="left:631px;top:494px;font-size:13px;line-height:17px;"><span style="padding-left:32px"></span>l.select<span style="font-weight:bold;">(</span>f.id<span style="font-weight:bold;">())</span></div><div class="t" style="left:575px;top:511px;font-size:13px;line-height:17px;color:#5050e0;width:22px;text-align:right">7</div><div class="t" style="left:631px;top:511px;font-size:13px;line-height:17px;"></div><div style="position:absolute;left:621px;top:451px;width:6px;height:1px;background:#333"></div><div style="position:absolute;left:621px;top:485px;width:6px;height:1px;background:#333"></div><svg style="position:absolute;left:647px;top:494px;" width="1" height="16" viewBox="0 0 1 16"><rect x="0" y="0" width="1" height="1" fill="#888"/><rect x="0" y="2" width="1" height="1" fill="#888"/><rect x="0" y="4" width="1" height="1" fill="#888"/><rect x="0" y="6" width="1" height="1" fill="#888"/><rect x="0" y="8" width="1" height="1" fill="#888"/><rect x="0" y="10" width="1" height="1" fill="#888"/><rect x="0" y="12" width="1" height="1" fill="#888"/><rect x="0" y="14" width="1" height="1" fill="#888"/></svg><div style="position:absolute;left:631px;top:411px;width:1px;height:15px;background:#000"></div><div style="position:absolute;left:276px;top:724px;width:23px;height:22px;border:1px solid #8c8880;border-radius:2px;"></div><div style="position:absolute;left:301px;top:724px;width:78px;height:22px;border:1px solid #8c8880;border-radius:2px;"></div><div class="t" style="left:307px;top:729px;">Координаты:</div><div style="position:absolute;left:381px;top:724px;width:304px;height:22px;border:1px solid #8c8880;border-radius:2px;"></div><div style="position:absolute;left:384px;top:726px;width:299px;height:19px;background:#fff;border-radius:3px;border-left:1px solid #a8a49c;border-top:1px solid #a8a49c"></div><div class="t" style="left:476px;top:729px;letter-spacing:0.1px">3331600.74,368743.73</div><div style="position:absolute;left:687px;top:724px;width:58px;height:22px;border:1px solid #8c8880;border-radius:2px;"></div><div class="t" style="left:692px;top:729px;letter-spacing:-0.4px">Масштаб</div><div style="position:absolute;left:747px;top:724px;width:84px;height:22px;border:1px solid #8c8880;border-radius:2px;"></div><div style="position:absolute;left:750px;top:726px;width:64px;height:19px;background:#fff"></div><div style="position:absolute;left:814px;top:726px;width:15px;height:19px;background:linear-gradient(#e8e6e2,#d0ccc4);border-left:1px solid #c0bcb4"></div><svg style="position:absolute;left:817px;top:733px;" width="9" height="5" viewBox="0 0 9 5"><path d="M0 0H9L4.5 5Z" fill="#000"/></svg><div class="t" style="left:754px;top:729px;">1:13963</div><div style="position:absolute;left:834px;top:724px;width:24px;height:22px;border:1px solid #8c8880;border-radius:2px;"></div><div style="position:absolute;left:860px;top:724px;width:83px;height:22px;border:1px solid #8c8880;border-radius:2px;"></div><div style="position:absolute;left:863px;top:726px;width:12px;height:14px;background:#fff;border:1px solid #888"></div><svg style="position:absolute;left:865px;top:729px;" width="8" height="8" viewBox="0 0 8 8"><path d="M0.5 0.5L7.5 7.5M7.5 0.5L0.5 7.5" stroke="#000" stroke-width="2.4"/></svg><div class="t" style="left:880px;top:729px;">Отрисовка</div><div style="position:absolute;left:945px;top:724px;width:76px;height:22px;border:1px solid #8c8880;border-radius:2px;"></div><div class="t" style="left:950px;top:729px;letter-spacing:-0.4px">USER:100002</div><div style="position:absolute;left:1023px;top:724px;width:24px;height:22px;border:1px solid #8c8880;border-radius:2px;"></div><svg style="position:absolute;left:1050px;top:734px;" width="16" height="15" viewBox="0 0 16 15"><path d="M15 2L2 15M15 6L6 15M15 10L10 15" stroke="#fff" stroke-width="1"/><path d="M15 3L3 15M15 7L7 15M15 11L11 15" stroke="#808080" stroke-width="1"/></svg><svg style="position:absolute;left:564px;top:704px;" width="429" height="16" viewBox="0 0 429 16"><defs><pattern id="chk" width="2" height="2" patternUnits="userSpaceOnUse"><rect width="2" height="2" fill="#fff"/><rect width="1" height="1" fill="#d4d0c8"/><rect x="1" y="1" width="1" height="1" fill="#d4d0c8"/></pattern></defs><rect width="429" height="16" fill="url(#chk)"/></svg><div style="position:absolute;left:564px;top:704px;width:15px;height:16px;border:1px solid #8c8880;border-radius:3px;background:linear-gradient(#f0eeea,#d6d2ca)"></div><svg style="position:absolute;left:569px;top:708px;" width="5" height="8" viewBox="0 0 5 8"><path d="M5 0V8L0 4Z" fill="#000"/></svg><div style="position:absolute;left:580px;top:704px;width:36px;height:16px;border:1px solid #8c8880;border-radius:3px;background:linear-gradient(#f0eeea,#d6d2ca)"></div><svg style="position:absolute;left:588px;top:708px;" width="20" height="8" viewBox="0 0 20 8"><rect x="0.0" y="0" width="1.5" height="1.5" fill="#a8a49c"/><rect x="0.0" y="3" width="1.5" height="1.5" fill="#a8a49c"/><rect x="0.0" y="6" width="1.5" height="1.5" fill="#a8a49c"/><rect x="3.5" y="0" width="1.5" height="1.5" fill="#a8a49c"/><rect x="3.5" y="3" width="1.5" height="1.5" fill="#a8a49c"/><rect x="3.5" y="6" width="1.5" height="1.5" fill="#a8a49c"/><rect x="7.0" y="0" width="1.5" height="1.5" fill="#a8a49c"/><rect x="7.0" y="3" width="1.5" height="1.5" fill="#a8a49c"/><rect x="7.0" y="6" width="1.5" height="1.5" fill="#a8a49c"/><rect x="10.5" y="0" width="1.5" height="1.5" fill="#a8a49c"/><rect x="10.5" y="3" width="1.5" height="1.5" fill="#a8a49c"/><rect x="10.5" y="6" width="1.5" height="1.5" fill="#a8a49c"/><rect x="14.0" y="0" width="1.5" height="1.5" fill="#a8a49c"/><rect x="14.0" y="3" width="1.5" height="1.5" fill="#a8a49c"/><rect x="14.0" y="6" width="1.5" height="1.5" fill="#a8a49c"/><rect x="17.5" y="0" width="1.5" height="1.5" fill="#a8a49c"/><rect x="17.5" y="3" width="1.5" height="1.5" fill="#a8a49c"/><rect x="17.5" y="6" width="1.5" height="1.5" fill="#a8a49c"/></svg><div style="position:absolute;left:993px;top:704px;width:15px;height:16px;border:1px solid #8c8880;border-radius:3px;background:linear-gradient(#f0eeea,#d6d2ca)"></div><svg style="position:absolute;left:998px;top:708px;" width="5" height="8" viewBox="0 0 5 8"><path d="M5 0V8L0 4Z" fill="#000"/></svg><div style="position:absolute;left:1008px;top:704px;width:16px;height:16px;border:1px solid #8c8880;border-radius:3px;background:linear-gradient(#f0eeea,#d6d2ca)"></div><svg style="position:absolute;left:1014px;top:708px;" width="5" height="8" viewBox="0 0 5 8"><path d="M0 0V8L5 4Z" fill="#000"/></svg><div style="position:absolute;left:550px;top:716px;width:62px;height:17px;background:#ffffe1;border:1px solid #000;box-shadow:2px 2px 1px rgba(0,0,0,0.35)"></div><div class="t" style="left:553px;top:718px;">Выполнить</div><svg style="position:absolute;left:0px;top:0px;pointer-events:none" width="1070" height="752" viewBox="0 0 1070 752"><path d="M545.5 277.4L574.1 246.9L619.2 282.8L588.5 304.3Z" fill="none" stroke="#a8a8a8" stroke-width="1"/><path d="M684.8 230.1L738.1 246.9L744.5 295.2L695.5 298.5L673.6 266.9Z" fill="none" stroke="#a8a8a8" stroke-width="1"/><path d="M629.3 248.4L663.3 234.6L649.7 283.4Z" fill="#ffff00" stroke="#333" stroke-width="1"/></svg><svg style="left:10px;top:50px" width="6" height="30"><rect width="6" height="30" fill="url(#grip)"/></svg><svg style="position:absolute;left:24px;top:54px;" width="18" height="22" viewBox="0 0 18 22"><path d="M0.5 0.5H12.5L17.5 5.5V21.5H0.5Z" fill="#fff" stroke="#5a5a5a"/><path d="M12.5 0.5V5.5H17.5" fill="#e8e8e8" stroke="#5a5a5a"/></svg><svg style="position:absolute;left:57px;top:56px;" width="23" height="19" viewBox="0 0 23 19"><path d="M1.5 1.5H8L10 3.5H19.5V16.5H1.5Z" fill="#f2cb3c" stroke="#c9a227"/><path d="M0.5 7.5H21.5L19.5 17.5H1.5Z" fill="#fde377" stroke="#c9a227"/></svg><svg style="position:absolute;left:93px;top:53px;" width="20" height="21" viewBox="0 0 20 21"><rect x="0.5" y="0.5" width="19" height="20" rx="2.5" fill="#5c89c8" stroke="#3b639f"/><rect x="3.5" y="1.5" width="13" height="8" fill="#f2f2f2"/><path d="M5 3.5H15M5 5.5H15M5 7.5H15" stroke="#445" stroke-width="1"/><rect x="4.5" y="12.5" width="11" height="7" fill="#f0f0f0" stroke="#3b639f" stroke-width="0.5"/><rect x="6" y="14" width="2.5" height="4" fill="#2a4f8a"/></svg><svg style="position:absolute;left:128px;top:53px;" width="20" height="21" viewBox="0 0 20 21"><rect x="0.5" y="0.5" width="19" height="20" rx="2.5" fill="#5c89c8" stroke="#3b639f"/><rect x="3.5" y="1.5" width="13" height="8" fill="#f2f2f2"/><path d="M5 3.5H15M5 5.5H15M5 7.5H15" stroke="#445" stroke-width="1"/><rect x="4.5" y="12.5" width="11" height="7" fill="#f0f0f0" stroke="#3b639f" stroke-width="0.5"/><rect x="6" y="14" width="2.5" height="4" fill="#2a4f8a"/></svg><svg style="position:absolute;left:139px;top:66px;" width="12" height="12" viewBox="0 0 12 12"><rect x="0.5" y="0.5" width="11" height="11" rx="2" fill="#4e9a4e" stroke="#2f6f2f"/><path d="M3 9L9 3" stroke="#fff" stroke-width="2"/></svg><svg style="position:absolute;left:161px;top:54px;" width="22" height="17" viewBox="0 0 22 17"><path d="M0.5 0.5H17L21.5 5V16.5H0.5Z" fill="#fff" stroke="#666"/><path d="M17 0.5V5H21.5" fill="#e4e4e4" stroke="#666"/></svg><svg style="position:absolute;left:174px;top:66px;" width="11" height="11" viewBox="0 0 11 11"><rect x="0.5" y="0.5" width="10" height="10" rx="1.5" fill="#d4ac1a" stroke="#a88412"/><path d="M5.5 2V9M2.5 3.5L8.5 7.5M8.5 3.5L2.5 7.5" stroke="#fff" stroke-width="1.3"/></svg><svg style="position:absolute;left:196px;top:54px;" width="23" height="23" viewBox="0 0 23 23"><path d="M0.5 0.5H17L21.5 5V16.5H0.5Z" fill="#fff" stroke="#666"/><path d="M17 0.5V5H21.5" fill="#e4e4e4" stroke="#666"/><path d="M9 6.5L14 11.5" stroke="#444" stroke-width="2.2"/><circle cx="8" cy="5.5" r="3" fill="none" stroke="#444" stroke-width="1.8"/><path d="M14 11.5L20.5 20.5" stroke="#7a6a20" stroke-width="3.6" stroke-linecap="round"/><path d="M14 11.5L20.5 20.5" stroke="#eacc5a" stroke-width="2" stroke-linecap="round"/></svg><svg style="left:234px;top:50px" width="6" height="30"><rect width="6" height="30" fill="url(#grip)"/></svg><div style="position:absolute;left:240px;top:49px;width:34px;height:33px;border:1px solid #7c7870;border-radius:3px;background:#c6c2ba"></div><svg style="position:absolute;left:240px;top:46px;" width="34" height="36" viewBox="0 0 34 36"><path d="M13.830000000000002 23.869999999999997L7.6000000000000005 30.099999999999998" stroke="#333" stroke-width="4" stroke-linecap="square"/><path d="M12.330000000000002 25.369999999999997L7.9 29.799999999999997" stroke="#e8c63a" stroke-width="2.2" stroke-linecap="butt"/><circle cx="20.5" cy="17.2" r="8.1" fill="#e2e2e2" stroke="#555" stroke-width="1.2"/><path d="M13 7L18 12L15 15Z M28 27L23 22L26 19Z" fill="#e88a3c" opacity="0.75"/><circle cx="16.4" cy="14.4" r="2.6" fill="none" stroke="#e06010" stroke-width="1.6"/><circle cx="23.3" cy="21.3" r="2.6" fill="none" stroke="#e06010" stroke-width="1.6"/></svg><svg style="position:absolute;left:283px;top:52px;" width="20" height="24" viewBox="0 0 20 24"><path d="M6 23L1 13C0.3 11.5 2 10.5 3 11.5L5.5 14V4C5.5 2.5 8 2.5 8 4V10V2.5C8 0.8 10.5 0.8 10.5 2.5V10V3.5C10.5 2 13 2 13 3.5V10.5V5.5C13 4 15.5 4 15.5 5.5V10.5V7C15.5 5.8 18 5.8 18 7V16C18 19 17 21 16 23Z" fill="#fff" stroke="#000" stroke-width="1.2" stroke-linejoin="round"/></svg><svg style="position:absolute;left:313px;top:52px;" width="26" height="25" viewBox="0 0 26 25"><rect x="2.5" y="1.5" width="17" height="12" fill="#f6e13a" stroke="#333" stroke-dasharray="1.5 1"/><g fill="#5a8fd0" stroke="#3a6aa8" stroke-width="0.8"><path d="M13 1L17.5 6H14.5V9H11.5V6H8.5Z"/><path d="M13 24L17.5 19H14.5V16H11.5V19H8.5Z"/><path d="M1 12.5L6 8V11H9V14H6V17Z"/><path d="M25 12.5L20 8V11H17V14H20V17Z"/></g></svg><svg style="position:absolute;left:344px;top:50px;" width="32" height="30" viewBox="0 0 32 30"><path d="M14.260000000000002 18.74L8.0 25.0" stroke="#333" stroke-width="4" stroke-linecap="square"/><path d="M12.760000000000002 20.24L8.3 24.7" stroke="#e8c63a" stroke-width="2.2" stroke-linecap="butt"/><circle cx="21" cy="12" r="8.2" fill="#e6e6e6" stroke="#444" stroke-width="1.2"/><path d="M21 7V17M16 12H26" stroke="#3a78c8" stroke-width="2.4"/></svg><svg style="position:absolute;left:379px;top:50px;" width="32" height="30" viewBox="0 0 32 30"><path d="M14.260000000000002 18.74L8.0 25.0" stroke="#333" stroke-width="4" stroke-linecap="square"/><path d="M12.760000000000002 20.24L8.3 24.7" stroke="#e8c63a" stroke-width="2.2" stroke-linecap="butt"/><circle cx="21" cy="12" r="8.2" fill="#e6e6e6" stroke="#444" stroke-width="1.2"/><path d="M16 12H26" stroke="#3a78c8" stroke-width="2.4"/></svg><svg style="position:absolute;left:412px;top:50px;" width="32" height="30" viewBox="0 0 32 30"><path d="M14.260000000000002 18.74L8.0 25.0" stroke="#a09c94" stroke-width="4" stroke-linecap="square"/><path d="M12.760000000000002 20.24L8.3 24.7" stroke="#f0efec" stroke-width="2.2" stroke-linecap="butt"/><circle cx="21" cy="12" r="8.2" fill="#e4e2dc" stroke="#9c9890" stroke-width="1.2"/><text x="21" y="15.5" font-family="Liberation Sans" font-size="9" font-weight="bold" fill="#9c9890" text-anchor="middle">1:1</text></svg><svg style="position:absolute;left:448px;top:50px;" width="34" height="30" viewBox="0 0 34 30"><g fill="#5b8fd0" stroke="#3a6aa8" stroke-width="0.5"><path d="M11 3H18.5L16 5.5L19 8.5L15.5 12L12.5 9L11 11Z"/><path d="M31 3H23.5L26 5.5L23 8.5L26.5 12L29.5 9L31 11Z"/><path d="M31 23H23.5L26 20.5L23 17.5L26.5 14L29.5 17L31 15Z"/></g><path d="M14.69 19.310000000000002L8.399999999999999 25.6" stroke="#333" stroke-width="4" stroke-linecap="square"/><path d="M13.19 20.810000000000002L8.7 25.3" stroke="#e8c63a" stroke-width="2.2" stroke-linecap="butt"/><circle cx="21.5" cy="12.5" r="8.3" fill="#e6e6e6" stroke="#555" stroke-width="1.2"/><g fill="#5b8fd0" stroke="#3a6aa8" stroke-width="0.5"><path d="M31 23H23.5L26 20.5L23 17.5L26.5 14L29.5 17L31 15Z"/></g></svg><svg style="position:absolute;left:484px;top:50px;" width="32" height="30" viewBox="0 0 32 30"><rect x="7.5" y="4.5" width="10" height="13" fill="#f6e13a" stroke="#333" stroke-dasharray="1.5 1"/><path d="M14.6 18.4L8.399999999999999 24.6" stroke="#333" stroke-width="4" stroke-linecap="square"/><path d="M13.1 19.9L8.7 24.3" stroke="#e8c63a" stroke-width="2.2" stroke-linecap="butt"/><circle cx="21.2" cy="11.8" r="8" fill="#eaeadf" stroke="#555" stroke-width="1.2"/></svg><svg style="position:absolute;left:518px;top:50px;" width="32" height="30" viewBox="0 0 32 30"><rect x="7.5" y="8.5" width="16" height="13" fill="#c8b8d4" stroke="#8a7a98"/><path d="M15.399999999999999 18.6L9.2 24.8" stroke="#333" stroke-width="4" stroke-linecap="square"/><path d="M13.899999999999999 20.1L9.5 24.5" stroke="#e8c63a" stroke-width="2.2" stroke-linecap="butt"/><circle cx="22" cy="12" r="8" fill="#e8e8e8" stroke="#555" stroke-width="1.2"/></svg><svg style="position:absolute;left:553px;top:50px;" width="32" height="30" viewBox="0 0 32 30"><path d="M14.4 18.6L8.2 24.8" stroke="#333" stroke-width="4" stroke-linecap="square"/><path d="M12.9 20.1L8.5 24.5" stroke="#e8c63a" stroke-width="2.2" stroke-linecap="butt"/><circle cx="21" cy="12" r="8" fill="#e8e8e8" stroke="#555" stroke-width="1.2"/><rect x="21" y="16" width="12" height="12" fill="#4f86c8"/><path d="M29 18.5L24.5 22L29 25.5" stroke="#fff" stroke-width="1.6" fill="none"/></svg><svg style="position:absolute;left:588px;top:50px;" width="32" height="30" viewBox="0 0 32 30"><path d="M14.4 18.6L8.2 24.8" stroke="#aaa" stroke-width="4" stroke-linecap="square"/><path d="M12.9 20.1L8.5 24.5" stroke="#f4f3f0" stroke-width="2.2" stroke-linecap="butt"/><circle cx="21" cy="12" r="8" fill="#e6e4de" stroke="#a8a49c" stroke-width="1.2"/><rect x="21" y="16" width="12" height="12" fill="#b4b0a8"/><path d="M25 18.5L29.5 22L25 25.5" stroke="#fff" stroke-width="1.6" fill="none"/></svg><svg style="position:absolute;left:631px;top:52px;" width="23" height="23" viewBox="0 0 23 23"><path d="M3 10A8.5 8.5 0 0 1 18 5L20.5 2.5V10.5H12.5L15 8A5 5 0 0 0 6.5 10.5Z" fill="#3f7fd0" stroke="#2a5ea8" stroke-width="0.6"/><path d="M20 13A8.5 8.5 0 0 1 5 18L2.5 20.5V12.5H10.5L8 15A5 5 0 0 0 16.5 12.5Z" fill="#3f7fd0" stroke="#2a5ea8" stroke-width="0.6"/></svg><svg style="left:668px;top:50px" width="6" height="30"><rect width="6" height="30" fill="url(#grip)"/></svg><svg style="position:absolute;left:678px;top:52px;" width="28" height="26" viewBox="0 0 28 26"><circle cx="9" cy="9.5" r="8" fill="#5b8fd2" stroke="#3c6aa8"/><text x="9" y="14" font-family="Liberation Serif" font-style="italic" font-weight="bold" font-size="12" fill="#fff" text-anchor="middle">i</text><path transform="translate(14 9) scale(1.0)" d="M0 0V13L3.2 10L5.5 15L7.5 14L5.3 9.2H9.5Z" fill="#fff" stroke="#000" stroke-width="0.9" stroke-linejoin="round"/></svg><svg style="position:absolute;left:714px;top:52px;" width="28" height="26" viewBox="0 0 28 26"><rect x="8.5" y="0" width="3" height="4" fill="#c8c8c8" stroke="#888" stroke-width="0.6" transform="rotate(0 10 10)"/><rect x="8.5" y="0" width="3" height="4" fill="#c8c8c8" stroke="#888" stroke-width="0.6" transform="rotate(45 10 10)"/><rect x="8.5" y="0" width="3" height="4" fill="#c8c8c8" stroke="#888" stroke-width="0.6" transform="rotate(90 10 10)"/><rect x="8.5" y="0" width="3" height="4" fill="#c8c8c8" stroke="#888" stroke-width="0.6" transform="rotate(135 10 10)"/><rect x="8.5" y="0" width="3" height="4" fill="#c8c8c8" stroke="#888" stroke-width="0.6" transform="rotate(180 10 10)"/><rect x="8.5" y="0" width="3" height="4" fill="#c8c8c8" stroke="#888" stroke-width="0.6" transform="rotate(225 10 10)"/><rect x="8.5" y="0" width="3" height="4" fill="#c8c8c8" stroke="#888" stroke-width="0.6" transform="rotate(270 10 10)"/><rect x="8.5" y="0" width="3" height="4" fill="#c8c8c8" stroke="#888" stroke-width="0.6" transform="rotate(315 10 10)"/><circle cx="10" cy="10" r="7.5" fill="#d6d6d6" stroke="#888"/><circle cx="10" cy="10" r="5" fill="#5b8fd2" stroke="#3c6aa8" stroke-width="0.6"/><path d="M8.5 7V13L13 10Z" fill="#fff"/><path transform="translate(14 10) scale(1.0)" d="M0 0V13L3.2 10L5.5 15L7.5 14L5.3 9.2H9.5Z" fill="#fff" stroke="#000" stroke-width="0.9" stroke-linejoin="round"/></svg><svg style="position:absolute;left:744px;top:62px;" width="9" height="5" viewBox="0 0 9 5"><path d="M0 0H9L4.5 5Z" fill="#000"/></svg><svg style="position:absolute;left:760px;top:52px;" width="28" height="25" viewBox="0 0 28 25"><rect x="1.5" y="1.5" width="23" height="20" fill="#e4e2de" stroke="#333" stroke-dasharray="2 1"/><rect x="3" y="3" width="15" height="14" fill="#f6e13a"/><path transform="translate(11 11) scale(1.0)" d="M0 0V13L3.2 10L5.5 15L7.5 14L5.3 9.2H9.5Z" fill="#fff" stroke="#000" stroke-width="0.9" stroke-linejoin="round"/></svg><svg style="position:absolute;left:791px;top:62px;" width="9" height="5" viewBox="0 0 9 5"><path d="M0 0H9L4.5 5Z" fill="#000"/></svg><svg style="position:absolute;left:810px;top:56px;" width="22" height="22" viewBox="0 0 22 22"><rect x="1.5" y="0.5" width="14" height="14" fill="#f6e13a" stroke="#b8a020" stroke-dasharray="1.5 1"/><rect x="10.5" y="10.5" width="10" height="10" rx="1.5" fill="#d32020" stroke="#901010"/><circle cx="15.5" cy="15.5" r="3" fill="none" stroke="#fff" stroke-width="1.3"/><path d="M13.5 17.5L17.5 13.5" stroke="#fff" stroke-width="1.3"/></svg><svg style="position:absolute;left:845px;top:54px;" width="24" height="24" viewBox="0 0 24 24"><path d="M10.5 3C10 1 7.5 0.5 6 0.8C3 1.3 1.8 3.5 2.5 5.2C3 6.5 5 7.2 7.5 7.2H8.5M7.5 7.2C4 7.2 0.8 8.5 0.8 11C0.8 13.5 3.5 14.8 6.5 14.6C8.5 14.4 10 13.3 10.8 11.8" stroke="#4e2a70" stroke-width="1.7" fill="none"/><circle cx="10.2" cy="2.8" r="1.4" fill="#4e2a70"/><rect x="9.5" y="10.5" width="12.5" height="12" rx="1.5" fill="#fce14a" stroke="#c8a020" stroke-dasharray="1 2"/></svg><svg style="position:absolute;left:880px;top:54px;" width="21" height="22" viewBox="0 0 21 22"><rect x="0.5" y="0.5" width="20" height="20" fill="#eef2f8" stroke="#4a6a90"/><rect x="1" y="1" width="19" height="5" fill="#b8cce4"/><path d="M2 3.5H7M9 3.5H19M2 9H5M7 9H19M2 12H5M7 12H19M2 15H5M7 15H19M2 18H5M7 18H19" stroke="#3a5a80" stroke-width="1.2"/></svg><svg style="position:absolute;left:930px;top:63px;" width="9" height="6" viewBox="0 0 9 6"><path d="M0.5 0.5L3 3L0.5 5.5M4.5 0.5L7 3L4.5 5.5" stroke="#000" stroke-width="1.5" fill="none"/></svg><svg style="left:948px;top:50px" width="6" height="30"><rect width="6" height="30" fill="url(#grip)"/></svg><svg style="position:absolute;left:961px;top:54px;" width="20" height="22" viewBox="0 0 20 22"><rect x="0.5" y="0.5" width="19" height="20" rx="1" fill="#5b87c2" stroke="#1e2a38"/><rect x="0.5" y="0.5" width="4" height="20" fill="#263444"/><text x="12" y="15" font-family="Liberation Sans" font-size="13" fill="#fff" text-anchor="middle">?</text></svg><svg style="position:absolute;left:991px;top:63px;" width="9" height="6" viewBox="0 0 9 6"><path d="M0.5 0.5L3 3L0.5 5.5M4.5 0.5L7 3L4.5 5.5" stroke="#000" stroke-width="1.5" fill="none"/></svg><svg style="left:1010px;top:50px" width="6" height="30"><rect width="6" height="30" fill="url(#grip)"/></svg><svg style="position:absolute;left:1020px;top:56px;" width="23" height="13" viewBox="0 0 23 13"><path d="M4.5 0.5H22.5V11.5H4.5L0.5 6Z" fill="#f2d43a" stroke="#b89a18"/><text x="13.5" y="9.5" font-family="Liberation Sans" font-size="9" font-weight="bold" fill="#333" text-anchor="middle">abc</text></svg><svg style="position:absolute;left:1053px;top:63px;" width="9" height="6" viewBox="0 0 9 6"><path d="M0.5 0.5L3 3L0.5 5.5M4.5 0.5L7 3L4.5 5.5" stroke="#000" stroke-width="1.5" fill="none"/></svg><svg style="left:10px;top:89px" width="6" height="30"><rect width="6" height="30" fill="url(#grip)"/></svg><svg style="position:absolute;left:20px;top:96px;" width="26" height="16" viewBox="0 0 26 16"><text x="1.5" y="13" font-family="Liberation Serif" font-size="13.5" font-weight="bold" fill="#000" textLength="22" lengthAdjust="spacingAndGlyphs">1.2</text></svg><svg style="position:absolute;left:57px;top:93px;" width="22" height="22" viewBox="0 0 22 22"><rect x="1" y="1" width="20" height="20" fill="#c8c4bc" stroke="#22a022" stroke-width="2"/><rect x="4.5" y="4.5" width="13" height="13" fill="#d0ccc4" stroke="#2f6fc0" stroke-width="1.6"/></svg><div style="position:absolute;left:86px;top:89px;width:1px;height:30px;background:#a8a49c"></div><div style="position:absolute;left:87px;top:89px;width:1px;height:30px;background:#fff"></div><svg style="position:absolute;left:94px;top:92px;" width="24" height="24" viewBox="0 0 24 24"><path d="M3.6 3.6L20.2 20.9" stroke="#9a968e" stroke-width="1.3"/><circle cx="3.6" cy="3.6" r="2.1" fill="#6e6e6e"/><circle cx="20.2" cy="20.9" r="2.1" fill="#6e6e6e"/><text x="13" y="9.5" font-family="Liberation Sans" font-size="9" fill="#6e6e6e" >н1</text><text x="3" y="21.5" font-family="Liberation Sans" font-size="10" fill="#6e6e6e" >9</text></svg><svg style="position:absolute;left:129px;top:92px;" width="24" height="24" viewBox="0 0 24 24"><path d="M3.5 3.6L20.2 20.9" stroke="#6e6e6e" stroke-width="1.6"/><circle cx="3.5" cy="3.6" r="2.1" fill="#6e6e6e"/><circle cx="13.1" cy="12.7" r="2.1" fill="#6e6e6e"/><circle cx="20.2" cy="20.9" r="2.1" fill="#6e6e6e"/><text x="8.5" y="9.5" font-family="Liberation Sans" font-size="9" fill="#6e6e6e" >1</text><text x="3.5" y="21.5" font-family="Liberation Sans" font-size="9" fill="#6e6e6e" >2</text><text x="17.5" y="15.5" font-family="Liberation Sans" font-size="9" fill="#6e6e6e" >3</text></svg><svg style="position:absolute;left:164px;top:92px;" width="24" height="24" viewBox="0 0 24 24"><path d="M3.9 3.6L20 20.9" stroke="#6e6e6e" stroke-width="1.6"/><circle cx="3.9" cy="3.6" r="2.1" fill="#6e6e6e"/><circle cx="20" cy="20.9" r="2.1" fill="#6e6e6e"/><text x="15.5" y="9.5" font-family="Liberation Sans" font-size="9" fill="#6e6e6e" >1</text><text x="3" y="21" font-family="Liberation Sans" font-size="9" fill="#6e6e6e" >9</text><path d="M14.5 10.5H22M2.5 22.5H9" stroke="#6e6e6e"/></svg><svg style="position:absolute;left:199px;top:92px;" width="24" height="24" viewBox="0 0 24 24"><rect x="2.5" y="14.5" width="8" height="7" fill="none" stroke="#6e6e6e" stroke-width="1.4"/><path d="M11.4 7V17M6.5 11.7H16.5" stroke="#9a968e" stroke-width="1.6"/><circle cx="18.6" cy="5.4" r="2.4" fill="none" stroke="#6e6e6e" stroke-width="0.9"/></svg><svg style="position:absolute;left:233px;top:92px;" width="24" height="24" viewBox="0 0 24 24"><path d="M3.5 3.5L20 20" stroke="#9a968e" stroke-width="1.1"/><circle cx="3.6" cy="3.5" r="2.4" fill="#d4d0c8" stroke="#9a968e" stroke-width="1.1"/><circle cx="20" cy="20.2" r="2.4" fill="#d4d0c8" stroke="#9a968e" stroke-width="1.1"/></svg><svg style="position:absolute;left:269px;top:92px;" width="24" height="24" viewBox="0 0 24 24"><path d="M5 20L14 11M5 11L14 20" stroke="#9a968e" stroke-width="1.6" opacity="0.8"/><rect x="2.5" y="14.5" width="7" height="7" fill="none" stroke="#6e6e6e" stroke-width="1.5"/><rect x="13" y="2.5" width="7" height="7" fill="none" stroke="#6e6e6e" stroke-width="1.5"/></svg><svg style="position:absolute;left:304px;top:92px;" width="24" height="24" viewBox="0 0 24 24"><rect x="2.5" y="14.5" width="7" height="7" fill="none" stroke="#6e6e6e" stroke-width="1.5"/><rect x="16.5" y="2.5" width="7" height="7" fill="none" stroke="#6e6e6e" stroke-width="1.5"/></svg><svg style="position:absolute;left:339px;top:92px;" width="24" height="24" viewBox="0 0 24 24"><path d="M1 8.5H8M4.5 5V12" stroke="#9a968e" stroke-width="1.8"/><text x="9" y="13" font-family="Liberation Sans" font-size="14" fill="#9a968e" >S</text><rect x="2" y="14.5" width="7" height="7" fill="none" stroke="#6e6e6e" stroke-width="1.5"/><rect x="13.5" y="14.5" width="7" height="7" fill="none" stroke="#6e6e6e" stroke-width="1.5"/></svg><div style="position:absolute;left:370px;top:89px;width:1px;height:30px;background:#a8a49c"></div><div style="position:absolute;left:371px;top:89px;width:1px;height:30px;background:#fff"></div><svg style="position:absolute;left:377px;top:92px;" width="24" height="24" viewBox="0 0 24 24"><rect x="1.7" y="1.7" width="19.5" height="19.5" fill="none" stroke="#6e6e6e" stroke-width="1.5"/><path d="M11.4 2V21" stroke="#6e6e6e" stroke-width="1.5"/><path d="M5 11.5H18M11.4 6V17" stroke="#9a968e" stroke-width="3"/><path d="M11.4 2V21" stroke="#6e6e6e" stroke-width="1"/></svg><svg style="position:absolute;left:412px;top:92px;" width="24" height="24" viewBox="0 0 24 24"><path d="M6 13.5H16M12 8V19" stroke="#9a968e" stroke-width="1.8"/><rect x="2" y="14.5" width="7" height="7" fill="none" stroke="#6e6e6e" stroke-width="1.5"/><rect x="14.5" y="14.5" width="7" height="7" fill="none" stroke="#6e6e6e" stroke-width="1.5"/><rect x="14.5" y="2" width="7" height="7" fill="none" stroke="#6e6e6e" stroke-width="1.5"/></svg><svg style="position:absolute;left:447px;top:92px;" width="24" height="24" viewBox="0 0 24 24"><rect x="2.2" y="2.2" width="19.5" height="19.5" fill="none" stroke="#6e6e6e" stroke-width="1.5"/><path d="M5.5 21.5L17 2.5M8 21.5L19.5 2.5" stroke="#6e6e6e" stroke-width="1.3"/></svg><div style="position:absolute;left:477px;top:89px;width:1px;height:30px;background:#a8a49c"></div><div style="position:absolute;left:478px;top:89px;width:1px;height:30px;background:#fff"></div><svg style="position:absolute;left:485px;top:92px;" width="24" height="24" viewBox="0 0 24 24"><defs><radialGradient id="gi" cx="0.4" cy="0.35" r="0.7"><stop offset="0" stop-color="#d8d6d0"/><stop offset="1" stop-color="#9a968e"/></radialGradient></defs><circle cx="11.8" cy="11.5" r="10.8" fill="url(#gi)"/><rect x="10.5" y="9.5" width="3" height="8.5" fill="#f2f0ea"/><rect x="10.5" y="5.5" width="3" height="2.5" fill="#f2f0ea"/></svg><svg style="position:absolute;left:520px;top:96px;" width="26" height="16" viewBox="0 0 26 16"><text x="1.5" y="13" font-family="Liberation Sans" font-size="13.5" font-weight="bold" fill="#5c5c5c" textLength="21" lengthAdjust="spacingAndGlyphs">МП</text></svg><div style="position:absolute;left:550px;top:89px;width:1px;height:30px;background:#a8a49c"></div><div style="position:absolute;left:551px;top:89px;width:1px;height:30px;background:#fff"></div><svg style="position:absolute;left:558px;top:92px;" width="24" height="24" viewBox="0 0 24 24"><circle cx="12.5" cy="7" r="4.2" fill="none" stroke="#222" stroke-width="1"/><path d="M9.6 4.1L15.4 9.9M15.4 4.1L9.6 9.9" stroke="#222" stroke-width="0.9"/><path d="M6.6 13.6L2 21.8H11Z" fill="none" stroke="#222" stroke-width="1.2" stroke-linejoin="round"/><path d="M17.8 13.6L13.2 21.8H22.4Z" fill="none" stroke="#222" stroke-width="1.2" stroke-linejoin="round"/><circle cx="6.6" cy="19" r="0.6" fill="#222"/><circle cx="17.8" cy="19" r="0.6" fill="#222"/></svg><div style="position:absolute;left:588px;top:89px;width:1px;height:30px;background:#a8a49c"></div><div style="position:absolute;left:589px;top:89px;width:1px;height:30px;background:#fff"></div><svg style="position:absolute;left:598px;top:93px;" width="20" height="21" viewBox="0 0 20 21"><defs><linearGradient id="fg" x1="0" x2="1"><stop offset="0" stop-color="#a8a6a0"/><stop offset="0.5" stop-color="#e4e2dc"/><stop offset="1" stop-color="#a8a6a0"/></linearGradient></defs><path d="M0.5 1.5C0.5 0 18.5 0 18.5 1.5L11 11V19.5L8 19.5V11Z" fill="url(#fg)"/><ellipse cx="9.5" cy="1.5" rx="9" ry="1.4" fill="#c4c2bc"/></svg><svg style="position:absolute;left:17px;top:139px;" width="26" height="22" viewBox="0 0 26 22"><path d="M3.4 3L9.6 17.9L16.7 3H22.9" stroke="#3a5878" stroke-width="1.4" fill="none"/><circle cx="3.4" cy="3" r="2" fill="#fff" stroke="#3a5878" stroke-width="1.2"/><circle cx="9.6" cy="17.9" r="2" fill="#fff" stroke="#3a5878" stroke-width="1.2"/><circle cx="16.7" cy="3" r="2" fill="#fff" stroke="#3a5878" stroke-width="1.2"/><circle cx="22.9" cy="3" r="2" fill="#fff" stroke="#3a5878" stroke-width="1.2"/></svg><svg style="position:absolute;left:32px;top:154px;" width="10" height="10" viewBox="0 0 10 10"><rect x="0.5" y="0.5" width="9" height="9" rx="1.8" fill="#55a055" stroke="#3f7f3f"/><path d="M5 2V8M2 5H8" stroke="#fff" stroke-width="2"/></svg><svg style="position:absolute;left:18px;top:174px;" width="20" height="20" viewBox="0 0 20 20"><rect x="0.0" y="0.0" width="6.7" height="6.7" fill="#1e3a5f"/><rect x="6.6" y="0.0" width="6.7" height="6.7" fill="#6a9ad0"/><rect x="13.2" y="0.0" width="6.7" height="6.7" fill="#1e3a5f"/><rect x="0.0" y="6.6" width="6.7" height="6.7" fill="#6a9ad0"/><rect x="6.6" y="6.6" width="6.7" height="6.7" fill="#1e3a5f"/><rect x="13.2" y="6.6" width="6.7" height="6.7" fill="#6a9ad0"/><rect x="0.0" y="13.2" width="6.7" height="6.7" fill="#1e3a5f"/><rect x="6.6" y="13.2" width="6.7" height="6.7" fill="#6a9ad0"/><rect x="13.2" y="13.2" width="6.7" height="6.7" fill="#1e3a5f"/></svg><svg style="position:absolute;left:33px;top:189px;" width="10" height="10" viewBox="0 0 10 10"><rect x="0.5" y="0.5" width="9" height="9" rx="1.8" fill="#55a055" stroke="#3f7f3f"/><path d="M5 2V8M2 5H8" stroke="#fff" stroke-width="2"/></svg><svg style="position:absolute;left:17px;top:207px;" width="21" height="20" viewBox="0 0 21 20"><path d="M6 1.5C2.5 1.5 1 3.5 1 6.5C1 9 2.5 10.5 4.5 11C5.5 11.3 6 13 6.5 15C7 17.5 8.5 19 10 18.5C11 18 10.5 16 10.5 14C10.5 13 11 12.5 12 12.5C13 12.5 14.5 13 15.5 12.5C16.5 12 17.5 12.5 18.5 13C19 12 18 11 17 10.5C18 8.5 18.5 6 17.5 4C16 1.5 13 1 10.5 2C9 1.5 7.5 1.5 6 1.5Z" fill="#5b8fc8" stroke="#244a7c" stroke-width="1.1"/><path d="M4.5 4.5C3.5 6.5 4.5 8.5 6.5 9M10 4C9 6 9.5 9 11 10.5" stroke="#244a7c" stroke-width="0.8" fill="none"/><circle cx="13.5" cy="6" r="0.8" fill="#244a7c"/></svg><svg style="position:absolute;left:33px;top:222px;" width="10" height="10" viewBox="0 0 10 10"><rect x="0.5" y="0.5" width="9" height="9" rx="1.8" fill="#55a055" stroke="#3f7f3f"/><path d="M5 2V8M2 5H8" stroke="#fff" stroke-width="2"/></svg><svg style="position:absolute;left:17px;top:241px;" width="26" height="26" viewBox="0 0 26 26"><path d="M1.5 24C4 15 10 5 24 1C22 8 15 18 5 19Z" fill="#7aa6d8" stroke="#2a4f80" stroke-width="1"/><path d="M1.5 24L20 5M8 15L14 13M11 11L17 9" stroke="#c8dcf4" stroke-width="0.9"/></svg><svg style="position:absolute;left:33px;top:257px;" width="10" height="10" viewBox="0 0 10 10"><rect x="0.5" y="0.5" width="9" height="9" rx="1.8" fill="#55a055" stroke="#3f7f3f"/><path d="M5 2V8M2 5H8" stroke="#fff" stroke-width="2"/></svg><svg style="position:absolute;left:17px;top:275px;" width="26" height="24" viewBox="0 0 26 24"><path d="M1.5 1.5C12 1.5 23 5 24.5 12.5C18 12.5 8 15 1 22C4 15 4 8 1.5 1.5Z" fill="#6a9ad0" stroke="#1e3a5f" stroke-width="1.2"/><path d="M8 2.5C10 7 10 12 9 16M14 3.5C16 7 16.5 11 15.5 13M19 6C21 9 21 11 20.5 12.5" stroke="#1e3a5f" stroke-width="1" fill="none"/></svg><svg style="position:absolute;left:33px;top:291px;" width="10" height="10" viewBox="0 0 10 10"><rect x="0.5" y="0.5" width="9" height="9" rx="1.8" fill="#55a055" stroke="#3f7f3f"/><path d="M5 2V8M2 5H8" stroke="#fff" stroke-width="2"/></svg><svg style="position:absolute;left:18px;top:312px;" width="22" height="16" viewBox="0 0 22 16"><rect x="1.2" y="1.2" width="19" height="12.5" rx="4" fill="#6a9ad0" stroke="#1e3a5f" stroke-width="1.8"/></svg><svg style="position:absolute;left:33px;top:325px;" width="10" height="10" viewBox="0 0 10 10"><rect x="0.5" y="0.5" width="9" height="9" rx="1.8" fill="#55a055" stroke="#3f7f3f"/><path d="M5 2V8M2 5H8" stroke="#fff" stroke-width="2"/></svg><svg style="position:absolute;left:17px;top:342px;" width="26" height="26" viewBox="0 0 26 26"><circle cx="13" cy="12" r="11.5" fill="#8ab4e4" stroke="#5a86c0"/><path d="M7 5L12 4L13 8L9 9L10 14L7 13Z M15 5L20 6L19 10L16 9Z M14 12L19 13L17 19L14 17Z" fill="#2a4a78" opacity="0.85"/><path d="M2 12H24M13 1V23" stroke="#cfe0f4" stroke-width="0.6"/></svg><svg style="position:absolute;left:33px;top:359px;" width="10" height="10" viewBox="0 0 10 10"><rect x="0.5" y="0.5" width="9" height="9" rx="1.8" fill="#55a055" stroke="#3f7f3f"/><path d="M5 2V8M2 5H8" stroke="#fff" stroke-width="2"/></svg><svg style="position:absolute;left:17px;top:375px;" width="26" height="26" viewBox="0 0 26 26"><circle cx="13" cy="12.5" r="11.5" fill="#24446e" stroke="#1a2f4c"/><ellipse cx="13" cy="12.5" rx="5.5" ry="11" fill="#5a8ccc"/><path d="M2 8H24M1.5 12.5H24.5M2 17H24" stroke="#fff" stroke-width="1"/><path d="M13 1V24" stroke="#fff" stroke-width="0.8"/></svg><svg style="position:absolute;left:33px;top:393px;" width="10" height="10" viewBox="0 0 10 10"><rect x="0.5" y="0.5" width="9" height="9" rx="1.8" fill="#55a055" stroke="#3f7f3f"/><path d="M5 2V8M2 5H8" stroke="#fff" stroke-width="2"/></svg><svg style="position:absolute;left:17px;top:409px;" width="26" height="26" viewBox="0 0 26 26"><circle cx="13" cy="12" r="11.5" fill="#dbe8f6" stroke="#5a90d8" stroke-width="1.1"/><path d="M2 8H24M2 16H24M13 1V23" stroke="#7aa8e0" stroke-width="0.8"/><ellipse cx="13" cy="12" rx="6" ry="11.5" fill="none" stroke="#7aa8e0" stroke-width="0.8"/><path d="M6 5L10 16L14 5H18" stroke="#111" stroke-width="1.2" fill="none"/><circle cx="6" cy="5" r="1.4" fill="#fff" stroke="#111"/><circle cx="10" cy="16" r="1.4" fill="#fff" stroke="#111"/><circle cx="14" cy="5" r="1.4" fill="#fff" stroke="#111"/><circle cx="18" cy="5" r="1.4" fill="#fff" stroke="#111"/></svg><svg style="position:absolute;left:33px;top:427px;" width="10" height="10" viewBox="0 0 10 10"><rect x="0.5" y="0.5" width="9" height="9" rx="1.8" fill="#55a055" stroke="#3f7f3f"/><path d="M5 2V8M2 5H8" stroke="#fff" stroke-width="2"/></svg><svg style="position:absolute;left:21px;top:448px;" width="14" height="18" viewBox="0 0 14 18"><path d="M5 1C9 0 13 2 12.5 7C12 11 8 14.5 2.5 16.5L2 15C5.5 13 7 11 7 9C3 9 1 6.5 1.5 4.5C2 2.5 3 1.3 5 1Z" fill="#4f7fb8" stroke="#2a4f80" stroke-width="0.7"/></svg><svg style="position:absolute;left:33px;top:461px;" width="10" height="10" viewBox="0 0 10 10"><rect x="0.5" y="0.5" width="9" height="9" rx="1.8" fill="#55a055" stroke="#3f7f3f"/><path d="M5 2V8M2 5H8" stroke="#fff" stroke-width="2"/></svg><svg style="position:absolute;left:12px;top:479px;" width="24" height="20" viewBox="0 0 24 20"><path d="M2.4 3L8.2 17.7L15.5 3H21.4" stroke="#3a5878" stroke-width="1.4" fill="none"/><circle cx="2.4" cy="3" r="1.9" fill="#fff" stroke="#3a5878" stroke-width="1.2"/><circle cx="8.2" cy="17.7" r="1.9" fill="#fff" stroke="#3a5878" stroke-width="1.2"/><circle cx="15.5" cy="3" r="1.9" fill="#fff" stroke="#3a5878" stroke-width="1.2"/><circle cx="21.4" cy="3" r="1.9" fill="#fff" stroke="#3a5878" stroke-width="1.2"/></svg><svg style="position:absolute;left:27px;top:495px;" width="10" height="10" viewBox="0 0 10 10"><rect x="0.5" y="0.5" width="9" height="9" rx="1.5" fill="#d6ac1e" stroke="#a8840e"/><path d="M5 1.8V8.2M2 3.3L8 6.7M8 3.3L2 6.7" stroke="#fff" stroke-width="1.1"/></svg><svg style="position:absolute;left:42px;top:489px;" width="9" height="5" viewBox="0 0 9 5"><path d="M0 0H9L4.5 5Z" fill="#000"/></svg><svg style="position:absolute;left:19px;top:516px;" width="24" height="23" viewBox="0 0 24 23"><rect x="0.5" y="0.5" width="19.5" height="19.5" fill="#ececea" stroke="#8a8a88"/><rect x="14.5" y="13.5" width="9" height="8.5" rx="1.8" fill="#e8485a" stroke="#c02838"/><path d="M16.5 17.8H21.5" stroke="#fff" stroke-width="2"/></svg><svg style="position:absolute;left:19px;top:587px;" width="25" height="25" viewBox="0 0 25 25"><path d="M12.5 0V25M0 12.5H25" stroke="#333" stroke-width="1"/><circle cx="12.5" cy="12.5" r="4.2" fill="none" stroke="#c82020" stroke-width="1.2" stroke-dasharray="2.2 1.5"/><path d="M12.5 0V25M0 12.5H25" stroke="#333" stroke-width="1"/></svg><svg style="position:absolute;left:304px;top:323px;" width="3" height="192" viewBox="0 0 3 192"><rect width="3" height="192" fill="url(#grip1)"/></svg><svg style="position:absolute;left:317px;top:389px;" width="22" height="24" viewBox="0 0 22 24"><ellipse cx="14" cy="21.5" rx="6" ry="1.5" fill="#000" opacity="0.15"/><path d="M5 3C4 1 6.5 0 7.5 2L9 6" stroke="#9a6a20" stroke-width="2.6" stroke-linecap="round"/><path d="M6 7L11 5L12 7L7 9Z" fill="#d02020"/><path d="M7 9L12 7C14 11 18 15 20 17C17 20 11 21 9 21C9 17 8 12 7 9Z" fill="#f0d040" stroke="#c8a018" stroke-width="0.6"/></svg><svg style="position:absolute;left:317px;top:425px;" width="27" height="26" viewBox="0 0 27 26"><path d="M18.5 4.5A9 9 0 1 0 18.5 16.5" fill="none" stroke="#2a72d8" stroke-width="4"/><path d="M18.5 4.5A9 9 0 1 0 18.5 16.5" fill="none" stroke="#a8c8f0" stroke-width="1.5"/><circle cx="11" cy="10.5" r="3.5" fill="#f2d040"/><path d="M8 10.5A3.5 3.5 0 0 1 14 8" stroke="#3a78c0" stroke-width="2.2" fill="none"/><path d="M21 21H26L23.5 24Z" fill="#000"/></svg><svg style="position:absolute;left:316px;top:458px;" width="24" height="24" viewBox="0 0 24 24"><path d="M11 1C6 1 6 3 6 5V8H12V9H4C1.5 9 0.5 11 0.5 14C0.5 17 1.5 19 4 19H6V15.5C6 13.5 7.5 12 9.5 12H15C17 12 18 11 18 9V5C18 3 16 1 11 1Z" fill="#3c78b8"/><circle cx="9" cy="4" r="1" fill="#fff"/><path d="M13 23C18 23 18 21 18 19V16H12V15H20C22.5 15 23.5 13 23.5 10C23.5 7 22.5 5 20 5H18V8.5C18 10.5 16.5 12 14.5 12H9C7 12 6 13 6 15V19C6 21 8 23 13 23Z" fill="#f6d23e"/><path d="M15 18L20 20.5L15 23" stroke="#333" stroke-width="1.3" fill="none"/></svg><div style="position:absolute;left:312px;top:489px;width:32px;height:1px;background:#a09c94"></div><div style="position:absolute;left:312px;top:490px;width:32px;height:1px;background:#fff"></div><div style="position:absolute;left:311px;top:491px;width:34px;height:33px;border:1px solid #7c7870;border-radius:3px;background:#c8c4bc"></div><svg style="position:absolute;left:317px;top:496px;" width="22" height="23" viewBox="0 0 22 23"><path d="M1.5 1.5H10L14.5 6V21.5H1.5Z" fill="#fff" stroke="#444"/><path d="M10 1.5V6H14.5" fill="#ddd" stroke="#444"/><path d="M4 8H9M4 11H12M4 14H12M4 17H12" stroke="#444" stroke-width="1.2"/><path d="M19.5 3L12 16" stroke="#a04010" stroke-width="4.2" stroke-linecap="round"/><path d="M19.5 3L12 16" stroke="#f08020" stroke-width="2.6"/><path d="M12 16L11 19.5L13.5 17" fill="#666"/></svg><div style="position:absolute;left:312px;top:526px;width:32px;height:1px;background:#a09c94"></div><div style="position:absolute;left:312px;top:527px;width:32px;height:1px;background:#fff"></div><svg style="position:absolute;left:316px;top:532px;" width="23" height="23" viewBox="0 0 23 23"><rect x="9.5" y="0.3" width="4" height="5" rx="0.8" fill="#3c70c8" transform="rotate(0 11.5 11.5)"/><rect x="9.5" y="0.3" width="4" height="5" rx="0.8" fill="#3c70c8" transform="rotate(30 11.5 11.5)"/><rect x="9.5" y="0.3" width="4" height="5" rx="0.8" fill="#3c70c8" transform="rotate(60 11.5 11.5)"/><rect x="9.5" y="0.3" width="4" height="5" rx="0.8" fill="#3c70c8" transform="rotate(90 11.5 11.5)"/><rect x="9.5" y="0.3" width="4" height="5" rx="0.8" fill="#3c70c8" transform="rotate(120 11.5 11.5)"/><rect x="9.5" y="0.3" width="4" height="5" rx="0.8" fill="#3c70c8" transform="rotate(150 11.5 11.5)"/><rect x="9.5" y="0.3" width="4" height="5" rx="0.8" fill="#3c70c8" transform="rotate(180 11.5 11.5)"/><rect x="9.5" y="0.3" width="4" height="5" rx="0.8" fill="#3c70c8" transform="rotate(210 11.5 11.5)"/><rect x="9.5" y="0.3" width="4" height="5" rx="0.8" fill="#3c70c8" transform="rotate(240 11.5 11.5)"/><rect x="9.5" y="0.3" width="4" height="5" rx="0.8" fill="#3c70c8" transform="rotate(270 11.5 11.5)"/><rect x="9.5" y="0.3" width="4" height="5" rx="0.8" fill="#3c70c8" transform="rotate(300 11.5 11.5)"/><rect x="9.5" y="0.3" width="4" height="5" rx="0.8" fill="#3c70c8" transform="rotate(330 11.5 11.5)"/><circle cx="11.5" cy="11.5" r="8.5" fill="#4a80d4" stroke="#2a58a8" stroke-width="0.8"/><circle cx="11.5" cy="11.5" r="5.5" fill="#9ab8e8"/><circle cx="11.5" cy="11.5" r="3.5" fill="#d4d4d4" stroke="#888" stroke-width="0.6"/></svg><svg style="position:absolute;left:317px;top:566px;" width="22" height="22" viewBox="0 0 22 22"><defs><radialGradient id="hb" cx="0.4" cy="0.3" r="0.8"><stop offset="0" stop-color="#7ab8f8"/><stop offset="1" stop-color="#1a6ad8"/></radialGradient></defs><circle cx="11" cy="11" r="10" fill="url(#hb)" stroke="#c8d4e4" stroke-width="1.2"/><text x="11" y="16" font-family="Liberation Sans" font-size="14" font-weight="bold" fill="#fff" text-anchor="middle">?</text></svg><div style="position:absolute;left:533px;top:413px;width:26px;height:1px;background:#fff"></div><div style="position:absolute;left:533px;top:414px;width:26px;height:1px;background:#c8c8c8"></div><div style="position:absolute;left:533px;top:472px;width:26px;height:1px;background:#fff"></div><div style="position:absolute;left:533px;top:473px;width:26px;height:1px;background:#c8c8c8"></div><div style="position:absolute;left:533px;top:503px;width:26px;height:1px;background:#fff"></div><div style="position:absolute;left:533px;top:504px;width:26px;height:1px;background:#c8c8c8"></div><div style="position:absolute;left:533px;top:590px;width:26px;height:1px;background:#fff"></div><div style="position:absolute;left:533px;top:591px;width:26px;height:1px;background:#c8c8c8"></div><div style="position:absolute;left:533px;top:649px;width:26px;height:1px;background:#fff"></div><div style="position:absolute;left:533px;top:650px;width:26px;height:1px;background:#c8c8c8"></div><div style="position:absolute;left:533px;top:680px;width:26px;height:1px;background:#fff"></div><div style="position:absolute;left:533px;top:681px;width:26px;height:1px;background:#c8c8c8"></div><svg style="position:absolute;left:537px;top:389px;" width="18" height="16" viewBox="0 0 18 16"><rect x="3.5" y="0.5" width="11" height="9" fill="#fff" stroke="#aaa" stroke-width="0.6"/><path d="M7 2.5A2.5 2.5 0 0 1 11.5 3.5H8.5V5" stroke="#3c78b8" stroke-width="1.6" fill="none"/><path d="M11 7.5A2.5 2.5 0 0 1 6.5 6.5" stroke="#f0c830" stroke-width="1.6" fill="none"/><path d="M0.5 8H17.5V15.5H0.5Z" fill="#5a9ae0"/><path d="M0.5 8H17.5V10H0.5Z" fill="#a8ccf4"/></svg><svg style="position:absolute;left:539px;top:420px;" width="16" height="16" viewBox="0 0 16 16"><rect x="0.5" y="0.5" width="13" height="15" rx="1" fill="#d8d6d2" stroke="#9a9a9a" stroke-width="0.7"/><rect x="2" y="1" width="10" height="7" fill="#f4f2ee"/><circle cx="7" cy="4.5" r="2.3" fill="none" stroke="#9a9a9a" stroke-width="1.2"/><rect x="3" y="10.5" width="8" height="5" fill="#f4f2ee"/><rect x="4" y="11.5" width="2" height="3" fill="#666"/></svg><svg style="position:absolute;left:539px;top:448px;" width="16" height="16" viewBox="0 0 16 16"><rect x="0.5" y="0.5" width="13" height="15" rx="1" fill="#5a7aa8" stroke="#3a5a88" stroke-width="0.7"/><rect x="2" y="1" width="10" height="7" fill="#f8e8e0"/><path d="M5 4.5A2.3 2.3 0 0 1 9 3.5" stroke="#3c78b8" stroke-width="1.8" fill="none"/><path d="M9 5A2.3 2.3 0 0 1 5 6" stroke="#f0c830" stroke-width="1.8" fill="none"/><rect x="3" y="10.5" width="8" height="5" fill="#f4f2ee"/><rect x="4" y="11.5" width="2" height="3" fill="#333"/><path d="M15 4L9 14" stroke="#f08020" stroke-width="2.6"/></svg><svg style="position:absolute;left:538px;top:479px;" width="16" height="16" viewBox="0 0 16 16"><path d="M9 9L14.5 14.5" stroke="#333" stroke-width="2.4" stroke-linecap="round"/><circle cx="6" cy="6" r="5" fill="#e8f0f8" stroke="#6a8aaa" stroke-width="1.2"/></svg><svg style="position:absolute;left:539px;top:511px;" width="15" height="15" viewBox="0 0 15 15"><path d="M4 0L9 10M11 0L6 10" stroke="#f4f4f4" stroke-width="1.3"/><circle cx="4" cy="11.5" r="2.5" fill="none" stroke="#d84a1a" stroke-width="1.8"/><circle cx="11" cy="11.5" r="2.5" fill="none" stroke="#d84a1a" stroke-width="1.8"/></svg><svg style="position:absolute;left:539px;top:537px;" width="15" height="16" viewBox="0 0 15 16"><path d="M0.5 0.5H7L10 3.5V12.5H0.5Z" fill="#fafafa" stroke="#ccc" stroke-width="0.5"/><path d="M4.5 3.5H11L14 6.5V15.5H4.5Z" fill="#fff" stroke="#ccc" stroke-width="0.5"/><path d="M6 9H12M6 11H12M6 13H12" stroke="#c8d4e0" stroke-width="0.8"/></svg><svg style="position:absolute;left:538px;top:565px;" width="16" height="17" viewBox="0 0 16 17"><rect x="0.5" y="1" width="10" height="13" fill="#d8b060"/><rect x="3" y="0" width="5" height="2.5" fill="#a8a8a8"/><path d="M5.5 5H12L15 8V16.5H5.5Z" fill="#fff" stroke="#ddd" stroke-width="0.5"/><path d="M7 10H13M7 12H13M7 14H13" stroke="#c8d4e0" stroke-width="0.8"/></svg><svg style="position:absolute;left:537px;top:595px;" width="18" height="18" viewBox="0 0 18 18"><path d="M6.5 1L4 17M12.5 1L10 17M1.5 6H17M0.5 12H16" stroke="#000" stroke-width="2.4"/></svg><svg style="position:absolute;left:537px;top:623px;" width="20" height="18" viewBox="0 0 20 18"><path d="M6.5 1L4 17M12.5 1L10 17M1.5 6H17M0.5 12H16" stroke="#000" stroke-width="2.4"/><circle cx="14" cy="13" r="3.6" fill="#e03030" stroke="#a01010" stroke-width="0.6"/><path d="M12 15L16 11" stroke="#fff" stroke-width="1.2"/></svg><svg style="position:absolute;left:538px;top:656px;" width="18" height="16" viewBox="0 0 18 16"><rect x="1.5" y="0.5" width="3" height="3" fill="none" stroke="#8a8a8a" stroke-width="0.8"/><rect x="5.5" y="6" width="3" height="3" fill="none" stroke="#8a8a8a" stroke-width="0.8"/><rect x="9.5" y="11.5" width="3" height="3" fill="none" stroke="#8a8a8a" stroke-width="0.8"/><path d="M3 3.5V13H9.5M3 7.5H5.5" stroke="#8a8a8a" stroke-width="0.8" fill="none"/><text x="8" y="4" font-family="Liberation Sans" font-size="4" fill="#8a8a8a">a(b)</text></svg><div style="position:absolute;left:532px;top:682px;width:28px;height:27px;border:1px solid #807c74;border-radius:3px;background:linear-gradient(#e6e4e0,#d2cec6)"></div><svg style="position:absolute;left:539px;top:686px;" width="16" height="19" viewBox="0 0 16 19"><path d="M1 1L15.5 9.5L1 18Z" fill="#2f6fdc" stroke="#1a50b0" stroke-width="0.6"/><path d="M4 10A2.5 2.5 0 0 1 8.5 8" stroke="#f0c830" stroke-width="2" fill="none"/><path d="M8.5 8A2.5 2.5 0 0 1 4 11" stroke="#f0c830" stroke-width="1.2" fill="none"/></svg><svg style="position:absolute;left:1035px;top:139px;" width="28" height="27" viewBox="0 0 28 27"><path d="M4 23L5 16L13 2.5L17 4.5L9 18Z" fill="#c4c2bc" stroke="#8a8882" stroke-width="0.8"/><path d="M9 24L10 17L18 3.5L22 5.5L14 19Z" fill="#c4c2bc" stroke="#8a8882" stroke-width="0.8"/><path d="M20 22H26L23 25Z" fill="#fff"/><path d="M20 22H26L23 25Z" fill="#8a8882" transform="translate(0 -1)" opacity="0.6"/></svg><svg style="position:absolute;left:1037px;top:174px;" width="18" height="24" viewBox="0 0 18 24"><path d="M1.5 22.5L2.5 16L11.5 1.5L16 4L6.5 19Z" fill="#e8d040" stroke="#7a6a20" stroke-width="0.9"/><path d="M11.5 1.5L16 4L15 6L10.5 3.5Z" fill="#f0f0f0" stroke="#7a6a20" stroke-width="0.6"/><path d="M2.5 16L6.5 19L1.5 22.5Z" fill="#bbb" stroke="#555" stroke-width="0.7"/></svg><svg style="position:absolute;left:1034px;top:208px;" width="24" height="26" viewBox="0 0 24 26"><rect x="1" y="1" width="19.5" height="19.5" rx="2" fill="#b6b4ae" stroke="#a4a29c" stroke-width="0.8"/><rect x="4.5" y="1.5" width="11.5" height="8" fill="#d8d6d0"/><path d="M5 3.5H15.5M5 5.5H15.5M5 7.5H15.5" stroke="#b6b4ae" stroke-width="0.9"/><rect x="5" y="13.5" width="10" height="7" fill="#d8d6d0"/><rect x="7" y="15" width="2.5" height="4.5" fill="#b6b4ae"/><path d="M22.5 9.5L15 21L13 24L14 20.5L21 8.5Z" fill="#b8b6b0" stroke="#8a8882" stroke-width="0.8"/></svg><svg style="position:absolute;left:1035px;top:241px;" width="22" height="14" viewBox="0 0 22 14"><path d="M2 5C2 1 7 1 11 2.5C15 1.5 20.5 1 20.5 5.5C20.5 8 18.5 9 17.5 11.5C16 13 13 12 10 11C6 12.5 1.5 12 1.5 8.5C1.5 7 2 6 2 5Z" fill="#c8c6c0" stroke="#8a8882" stroke-width="0.9"/></svg><svg style="position:absolute;left:1047px;top:255px;" width="11" height="11" viewBox="0 0 11 11"><rect x="0.5" y="0.5" width="10" height="10" rx="1.5" fill="#aaa8a2" stroke="#8e8c86" stroke-width="0.6"/><path d="M5.5 1.8V9.2M2.3 3.6L8.7 7.4M8.7 3.6L2.3 7.4" stroke="#fff" stroke-width="1.1"/></svg><svg style="position:absolute;left:1035px;top:276px;" width="22" height="14" viewBox="0 0 22 14"><path d="M2 5C2 1 7 1 11 2.5C15 1.5 20.5 1 20.5 5.5C20.5 8 18.5 9 17.5 11.5C16 13 13 12 10 11C6 12.5 1.5 12 1.5 8.5C1.5 7 2 6 2 5Z" fill="#c8c6c0" stroke="#8a8882" stroke-width="0.9"/></svg><svg style="position:absolute;left:1047px;top:289px;" width="11" height="11" viewBox="0 0 11 11"><rect x="0.5" y="0.5" width="10" height="10" rx="1.5" fill="#aaa8a2" stroke="#8e8c86" stroke-width="0.6"/><path d="M2 5.5H6.5M5.5 2.5L9 5.5L5.5 8.5Z" stroke="#fff" stroke-width="1.6" fill="#fff"/></svg><svg style="position:absolute;left:1035px;top:313px;" width="22" height="20" viewBox="0 0 22 20"><path d="M1.5 18L7 3.5M7 3.5H19" stroke="#8a8882" stroke-width="1"/><circle cx="7.5" cy="3.5" r="2.2" fill="#c6c4be" stroke="#8a8882" stroke-width="0.8"/><path d="M10 9L18 17M18 9L11 17" stroke="#8a8882" stroke-width="2.2"/><path d="M9 8L12 7L13 10" fill="#8a8882"/></svg><svg style="position:absolute;left:1036px;top:347px;" width="22" height="20" viewBox="0 0 22 20"><rect x="1.5" y="1.5" width="14" height="14" fill="none" stroke="#a8a6a0" stroke-dasharray="2 1.5"/><rect x="11.5" y="10" width="9.5" height="9.5" rx="1" fill="#aaa8a2" stroke="#8e8c86" stroke-width="0.6"/><path d="M13.5 12L19 17.5M19 12L13.5 17.5" stroke="#fff" stroke-width="1.6"/></svg><svg style="position:absolute;left:1033px;top:381px;" width="26" height="18" viewBox="0 0 26 18"><path d="M1 2.5L18 10M1 7.5L18 5.5" stroke="#8a8882" stroke-width="0.9"/><ellipse cx="21" cy="4" rx="3.3" ry="2.4" fill="none" stroke="#8a8882" stroke-width="1.3"/><ellipse cx="21" cy="13" rx="3.3" ry="2.4" fill="none" stroke="#8a8882" stroke-width="1.3"/></svg><svg style="position:absolute;left:1036px;top:414px;" width="20" height="20" viewBox="0 0 20 20"><path d="M7.5 1.5H13.5L17.5 5.5V15.5H7.5Z" fill="#f0eee8" stroke="#a8a6a0" stroke-width="0.9"/><path d="M9.5 8H15.5M9.5 10.5H15.5M9.5 13H15.5" stroke="#a8a6a0" stroke-width="0.9"/><path d="M1.5 3.5H8L12.5 8V18.5H1.5Z" fill="#fff" stroke="#6e6e6e" stroke-width="1"/><path d="M8 3.5V8H12.5" fill="#ddd" stroke="#6e6e6e" stroke-width="0.8"/><path d="M3.5 10H10.5M3.5 12.5H10.5M3.5 15H10.5" stroke="#6e6e6e" stroke-width="1.1"/></svg><svg style="position:absolute;left:1037px;top:446px;" width="18" height="22" viewBox="0 0 18 22"><rect x="1" y="2" width="16" height="19.5" fill="#dedcd6" stroke="#b4b2ac" stroke-width="0.9"/><rect x="6" y="0.5" width="6" height="4" rx="1" fill="#cfcdc7" stroke="#a4a29c" stroke-width="0.8"/><path d="M3.5 5H10.5L14.5 9V19H3.5Z" fill="#f4f2ea" stroke="#a8a6a0" stroke-width="0.8"/><path d="M5.5 10.5H12.5M5.5 13H12.5M5.5 15.5H12.5" stroke="#8e8c86" stroke-width="1"/></svg><svg style="position:absolute;left:1033px;top:479px;" width="26" height="26" viewBox="0 0 26 26"><rect x="1.5" y="1.5" width="5" height="5" fill="none" stroke="#8a8882" stroke-width="1"/><rect x="6.5" y="1.5" width="5" height="5" fill="none" stroke="#8a8882" stroke-width="1"/><path d="M6.5 6.5L12 17L19 4M5 9L12 23L19 9" stroke="#8a8882" stroke-width="0.9" fill="none"/><circle cx="19" cy="4" r="1" fill="#fff" stroke="#8a8882" stroke-width="0.6"/><circle cx="12" cy="17" r="1" fill="#fff" stroke="#8a8882" stroke-width="0.6"/><circle cx="5" cy="9" r="1" fill="#fff" stroke="#8a8882" stroke-width="0.6"/><circle cx="12" cy="23" r="1" fill="#fff" stroke="#8a8882" stroke-width="0.6"/></svg><svg style="position:absolute;left:1047px;top:492px;" width="11" height="11" viewBox="0 0 11 11"><rect x="0.5" y="0.5" width="10" height="10" rx="1.5" fill="#aaa8a2" stroke="#8e8c86" stroke-width="0.6"/><path d="M5.5 1.8V9.2M2.3 3.6L8.7 7.4M8.7 3.6L2.3 7.4" stroke="#fff" stroke-width="1.1"/></svg><svg style="left:1031px;top:518px" width="30" height="6"><rect width="30" height="6" fill="url(#grip)"/></svg><svg style="position:absolute;left:1036px;top:530px;" width="20" height="17" viewBox="0 0 20 17"><path d="M1 7L7 1V4.5C14 4 18 7 18 11C18 14 16 16 14 16C15.5 13 14.5 9.5 7 9.5V13Z" fill="#c6c4be" stroke="#8a8882" stroke-width="0.9" stroke-linejoin="round"/></svg><svg style="position:absolute;left:1036px;top:564px;" width="20" height="17" viewBox="0 0 20 17"><path d="M19 7L13 1V4.5C6 4 2 7 2 11C2 14 4 16 6 16C4.5 13 5.5 9.5 13 9.5V13Z" fill="#c6c4be" stroke="#8a8882" stroke-width="0.9" stroke-linejoin="round"/></svg><svg style="position:absolute;left:1035px;top:597px;" width="22" height="14" viewBox="0 0 22 14"><path d="M2 5C2 1 7 1 11 2.5C15 1.5 20.5 1 20.5 5.5C20.5 8 18.5 9 17.5 11.5C16 13 13 12 10 11C6 12.5 1.5 12 1.5 8.5C1.5 7 2 6 2 5Z" fill="#c8c6c0" stroke="#8a8882" stroke-width="0.9"/></svg><svg style="position:absolute;left:1047px;top:609px;" width="11" height="11" viewBox="0 0 11 11"><rect x="0.5" y="0.5" width="10" height="10" rx="1.5" fill="#aaa8a2" stroke="#8e8c86" stroke-width="0.6"/><path d="M3 6A2.8 2.8 0 1 1 6.5 8.5" stroke="#fff" stroke-width="1.2" fill="none"/><path d="M2 5L3.5 7.5L5 5Z" fill="#fff"/></svg><svg style="position:absolute;left:1034px;top:629px;" width="24" height="26" viewBox="0 0 24 26"><circle cx="9" cy="9" r="8" fill="#cac8c2" stroke="#8a8882" stroke-width="0.9"/><path d="M15 7.5L21.5 11.5V19L15 23L8.5 19V11.5Z" fill="#c6c4be" stroke="#8a8882" stroke-width="0.9"/><path d="M7 8C10 5 15 7 15 13V17M13 15L15 17.5L17 15" stroke="#8a8882" stroke-width="0.9" fill="none"/></svg><svg style="position:absolute;left:1035px;top:663px;" width="22" height="14" viewBox="0 0 22 14"><path d="M2 5C2 1 7 1 11 2.5C15 1.5 20.5 1 20.5 5.5C20.5 8 18.5 9 17.5 11.5C16 13 13 12 10 11C6 12.5 1.5 12 1.5 8.5C1.5 7 2 6 2 5Z" fill="#c8c6c0" stroke="#8a8882" stroke-width="0.9"/><ellipse cx="8" cy="6" rx="4.5" ry="3" fill="#dedcd6" stroke="#8a8882" stroke-width="0.8"/></svg><svg style="position:absolute;left:1047px;top:677px;" width="11" height="11" viewBox="0 0 11 11"><rect x="0.5" y="0.5" width="10" height="10" rx="1.5" fill="#aaa8a2" stroke="#8e8c86" stroke-width="0.6"/><path d="M5.5 1.8V9.2M2.3 3.6L8.7 7.4M8.7 3.6L2.3 7.4" stroke="#fff" stroke-width="1.1"/></svg><svg style="position:absolute;left:1045px;top:710px;" width="7" height="9" viewBox="0 0 7 9"><path d="M0.5 0.5L3.5 3.5L6.5 0.5M0.5 4.5L3.5 7.5L6.5 4.5" stroke="#000" stroke-width="1.5" fill="none"/></svg><div style="position:absolute;left:278px;top:726px;width:19px;height:18px;border:1px solid #8c8880;background:#c8c4bc"></div><svg style="position:absolute;left:281px;top:728px;" width="14" height="15" viewBox="0 0 14 15"><ellipse cx="6.5" cy="7.5" rx="4.5" ry="6.5" fill="#fff" stroke="#000" stroke-width="1.2" transform="rotate(-25 6.5 7.5)"/><path d="M4 3L7 8" stroke="#000" stroke-width="1.5"/><circle cx="8" cy="11" r="1.6" fill="#000"/><path d="M11 2L13 1M12 4L14 4" stroke="#555" stroke-width="0.7"/></svg><div style="position:absolute;left:836px;top:726px;width:20px;height:18px;border:1px solid #8c8880;background:#c8c4bc"></div><svg style="position:absolute;left:838px;top:727px;" width="17" height="17" viewBox="0 0 17 17"><path d="M3 16L10 8L14 2L15 3L12 9Z" fill="#8a8a86" stroke="#555" stroke-width="0.6"/><circle cx="6.5" cy="5.5" r="4" fill="none" stroke="#e02828" stroke-width="1.5"/><path d="M3.8 2.8L9.2 8.2" stroke="#e02828" stroke-width="1.5"/></svg><div style="position:absolute;left:1025px;top:726px;width:20px;height:18px;border:1px solid #8c8880;background:#d0ccc4"></div><svg style="position:absolute;left:1027px;top:727px;" width="17" height="17" viewBox="0 0 17 17"><circle cx="8.5" cy="8.5" r="7" fill="none" stroke="#222" stroke-width="1.6"/><path d="M8.5 2L14 8.5L8.5 15L3 8.5Z" fill="#777" stroke="#222" stroke-width="1.2"/><rect x="6" y="6" width="5" height="5" fill="#ccc" stroke="#222" stroke-width="1"/></svg><svg style="position:absolute;left:571px;top:388px;" width="14" height="14" viewBox="0 0 14 14"><circle cx="7" cy="7" r="6.5" fill="#7ac048" stroke="#a8c8e8" stroke-width="0.8"/><path d="M7 3V11M3 7H11" stroke="#fff" stroke-width="2.2"/></svg><svg style="position:absolute;left:609px;top:386px;" width="17" height="16" viewBox="0 0 17 16"><path d="M1.5 1.5H8L11.5 5V14.5H1.5Z" fill="#f4f4f4" stroke="#777" stroke-width="0.8"/><path d="M3.5 6H9.5M3.5 8.5H9.5M3.5 11H9.5" stroke="#666" stroke-width="1"/><path d="M10 3.5A2.5 2.5 0 0 1 15 2.5" stroke="#3c78b8" stroke-width="1.8" fill="none"/><path d="M15 3.5A2.5 2.5 0 0 1 11 5" stroke="#f0c830" stroke-width="1.5" fill="none"/></svg><div class="t" style="left:627px;top:388px;font-size:12px;letter-spacing:-0.3px">tr.py</div><svg style="position:absolute;left:652px;top:387px;" width="15" height="14" viewBox="0 0 15 14"><rect x="0.5" y="0.5" width="14" height="13" rx="1.5" fill="#e86a4a" stroke="#c04020" stroke-width="0.8"/><path d="M4 3.5L11 10.5M11 3.5L4 10.5" stroke="#fff" stroke-width="2"/></svg><svg style="position:absolute;left:1003px;top:389px;" width="17" height="17" viewBox="0 0 17 17"><circle cx="6.5" cy="6.5" r="6" fill="#74b83e" stroke="#a8c8e8" stroke-width="0.8"/><path d="M3 4H10L6.5 10Z" fill="#fff"/><path d="M14.5 11H19.5L17 14Z" fill="#000"/></svg></body></html>
